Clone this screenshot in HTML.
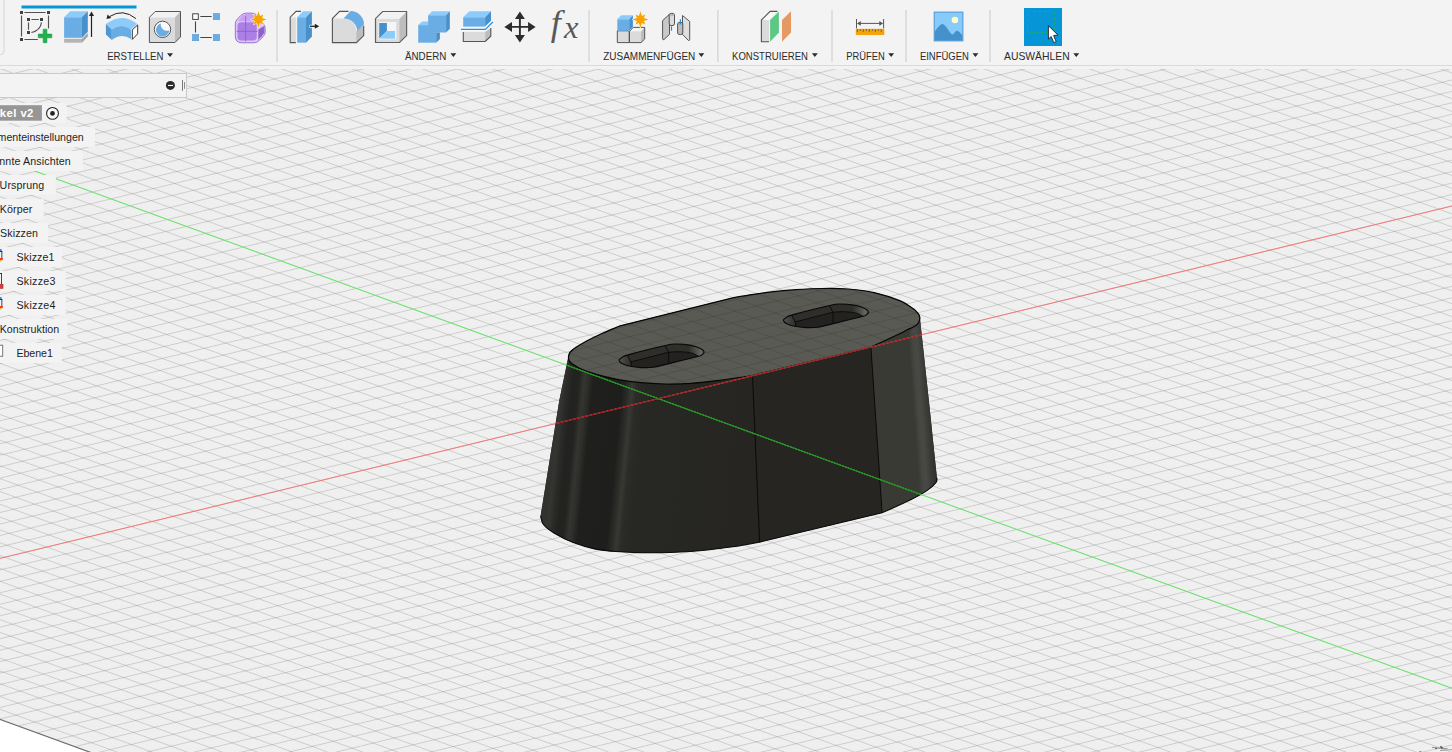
<!DOCTYPE html>
<html lang="de"><head><meta charset="utf-8"><title>Fusion 360</title>
<style>
html,body{margin:0;padding:0;}
body{width:1452px;height:752px;overflow:hidden;background:#fff;position:relative;font-family:"Liberation Sans",Arial,sans-serif;}
svg{position:absolute;left:0;top:0;display:block;}

</style></head><body>
<svg id="canvas" width="1452" height="752" viewBox="0 0 1452 752">
<defs><clipPath id="gridclip"><path d="M0 66 H1452 V752 H89.4 L0 719.4 Z"/></clipPath></defs>
<rect x="0" y="66" width="1452" height="686" fill="#ffffff"/>
<path d="M0 66 H1452 V752 H89.4 L0 719.4 Z" fill="#fefefe"/>
<g clip-path="url(#gridclip)" fill="none">
<path d="M-2.0 66.9L1.8 66.0M-2.0 68.1L6.6 66.0M-2.0 69.2L11.3 66.0M-2.0 70.4L16.0 66.0M-2.0 71.5L20.7 66.0M-2.0 72.7L25.5 66.0M-2.0 73.8L30.2 66.0M-2.0 75.0L34.9 66.0M-2.0 76.1L39.6 66.0M-2.0 78.4L49.1 66.0M-2.0 79.5L53.8 66.0M-2.0 80.7L58.5 66.0M-2.0 81.8L63.3 66.0M-2.0 83.0L68.0 66.0M-2.0 84.1L72.7 66.0M-2.0 85.3L77.4 66.0M-2.0 86.4L82.2 66.0M-2.0 87.6L86.9 66.0M-2.0 89.9L96.3 66.0M-2.0 91.0L101.1 66.0M-2.0 92.2L105.8 66.0M-2.0 93.3L110.5 66.0M-2.0 94.5L115.2 66.0M-2.0 95.6L120.0 66.0M-2.0 96.8L124.7 66.0M-2.0 97.9L129.4 66.0M-2.0 99.0L134.1 66.0M-2.0 101.3L143.6 66.0M-2.0 102.5L148.3 66.0M-2.0 103.6L153.0 66.0M-2.0 104.8L157.8 66.0M-2.0 105.9L162.5 66.0M-2.0 107.1L167.2 66.0M-2.0 108.2L171.9 66.0M-2.0 109.4L176.7 66.0M-2.0 110.5L181.4 66.0M-2.0 112.8L190.8 66.0M-2.0 114.0L195.6 66.0M-2.0 115.1L200.3 66.0M-2.0 116.2L205.0 66.0M-2.0 117.4L209.7 66.0M-2.0 118.5L214.5 66.0M-2.0 119.7L219.2 66.0M-2.0 120.8L223.9 66.0M-2.0 122.0L228.6 66.0M-2.0 124.3L238.1 66.0M-2.0 125.4L242.8 66.0M-2.0 126.6L247.5 66.0M-2.0 127.7L252.3 66.0M-2.0 128.9L257.0 66.0M-2.0 130.0L261.7 66.0M-2.0 131.2L266.4 66.0M-2.0 132.3L271.2 66.0M-2.0 133.4L275.9 66.0M-2.0 135.7L285.3 66.0M-2.0 136.9L290.1 66.0M-2.0 138.0L294.8 66.0M-2.0 139.2L299.5 66.0M-2.0 140.3L304.2 66.0M-2.0 141.5L309.0 66.0M-2.0 142.6L313.7 66.0M-2.0 143.8L318.4 66.0M-2.0 144.9L323.1 66.0M-2.0 147.2L332.6 66.0M-2.0 148.4L337.3 66.0M-2.0 149.5L342.0 66.0M-2.0 150.7L346.8 66.0M-2.0 151.8L351.5 66.0M-2.0 152.9L356.2 66.0M-2.0 154.1L360.9 66.0M-2.0 155.2L365.7 66.0M-2.0 156.4L370.4 66.0M-2.0 158.7L379.8 66.0M-2.0 159.8L384.6 66.0M-2.0 161.0L389.3 66.0M-2.0 162.1L394.0 66.0M-2.0 163.3L398.7 66.0M-2.0 164.4L403.5 66.0M-2.0 165.6L408.2 66.0M-2.0 166.7L412.9 66.0M-2.0 167.9L417.6 66.0M-2.0 170.1L427.1 66.0M-2.0 171.3L431.8 66.0M-2.0 172.4L436.5 66.0M-2.0 173.6L441.3 66.0M-2.0 174.7L446.0 66.0M-2.0 175.9L450.7 66.0M-2.0 177.0L455.4 66.0M-2.0 178.2L460.2 66.0M-2.0 179.3L464.9 66.0M-2.0 181.6L474.3 66.0M-2.0 182.8L479.1 66.0M-2.0 183.9L483.8 66.0M-2.0 185.1L488.5 66.0M-2.0 186.2L493.2 66.0M-2.0 187.3L498.0 66.0M-2.0 188.5L502.7 66.0M-2.0 189.6L507.4 66.0M-2.0 190.8L512.1 66.0M-2.0 193.1L521.6 66.0M-2.0 194.2L526.3 66.0M-2.0 195.4L531.0 66.0M-2.0 196.5L535.8 66.0M-2.0 197.7L540.5 66.0M-2.0 198.8L545.2 66.0M-2.0 200.0L549.9 66.0M-2.0 201.1L554.7 66.0M-2.0 202.3L559.4 66.0M-2.0 204.6L568.8 66.0M-2.0 205.7L573.5 66.0M-2.0 206.8L578.3 66.0M-2.0 208.0L583.0 66.0M-2.0 209.1L587.7 66.0M-2.0 210.3L592.4 66.0M-2.0 211.4L597.2 66.0M-2.0 212.6L601.9 66.0M-2.0 213.7L606.6 66.0M-2.0 216.0L616.1 66.0M-2.0 217.2L620.8 66.0M-2.0 218.3L625.5 66.0M-2.0 219.5L630.2 66.0M-2.0 220.6L635.0 66.0M-2.0 221.8L639.7 66.0M-2.0 222.9L644.4 66.0M-2.0 224.0L649.1 66.0M-2.0 225.2L653.9 66.0M-2.0 227.5L663.3 66.0M-2.0 228.6L668.0 66.0M-2.0 229.8L672.8 66.0M-2.0 230.9L677.5 66.0M-2.0 232.1L682.2 66.0M-2.0 233.2L686.9 66.0M-2.0 234.4L691.7 66.0M-2.0 235.5L696.4 66.0M-2.0 236.7L701.1 66.0M-2.0 239.0L710.6 66.0M-2.0 240.1L715.3 66.0M-2.0 241.2L720.0 66.0M-2.0 242.4L724.7 66.0M-2.0 243.5L729.5 66.0M-2.0 244.7L734.2 66.0M-2.0 245.8L738.9 66.0M-2.0 247.0L743.6 66.0M-2.0 248.1L748.4 66.0M-2.0 250.4L757.8 66.0M-2.0 251.6L762.5 66.0M-2.0 252.7L767.3 66.0M-2.0 253.9L772.0 66.0M-2.0 255.0L776.7 66.0M-2.0 256.2L781.4 66.0M-2.0 257.3L786.2 66.0M-2.0 258.5L790.9 66.0M-2.0 259.6L795.6 66.0M-2.0 261.9L805.1 66.0M-2.0 263.0L809.8 66.0M-2.0 264.2L814.5 66.0M-2.0 265.3L819.2 66.0M-2.0 266.5L824.0 66.0M-2.0 267.6L828.7 66.0M-2.0 268.8L833.4 66.0M-2.0 269.9L838.1 66.0M-2.0 271.1L842.9 66.0M-2.0 273.4L852.3 66.0M-2.0 274.5L857.0 66.0M-2.0 275.7L861.8 66.0M-2.0 276.8L866.5 66.0M-2.0 277.9L871.2 66.0M-2.0 279.1L875.9 66.0M-2.0 280.2L880.7 66.0M-2.0 281.4L885.4 66.0M-2.0 282.5L890.1 66.0M-2.0 284.8L899.6 66.0M-2.0 286.0L904.3 66.0M-2.0 287.1L909.0 66.0M-2.0 288.3L913.7 66.0M-2.0 289.4L918.5 66.0M-2.0 290.6L923.2 66.0M-2.0 291.7L927.9 66.0M-2.0 292.9L932.6 66.0M-2.0 294.0L937.4 66.0M-2.0 296.3L946.8 66.0M-2.0 297.4L951.5 66.0M-2.0 298.6L956.3 66.0M-2.0 299.7L961.0 66.0M-2.0 300.9L965.7 66.0M-2.0 302.0L970.4 66.0M-2.0 303.2L975.2 66.0M-2.0 304.3L979.9 66.0M-2.0 305.5L984.6 66.0M-2.0 307.8L994.1 66.0M-2.0 308.9L998.8 66.0M-2.0 310.1L1003.5 66.0M-2.0 311.2L1008.2 66.0M-2.0 312.4L1013.0 66.0M-2.0 313.5L1017.7 66.0M-2.0 314.6L1022.4 66.0M-2.0 315.8L1027.1 66.0M-2.0 316.9L1031.9 66.0M-2.0 319.2L1041.3 66.0M-2.0 320.4L1046.0 66.0M-2.0 321.5L1050.8 66.0M-2.0 322.7L1055.5 66.0M-2.0 323.8L1060.2 66.0M-2.0 325.0L1064.9 66.0M-2.0 326.1L1069.7 66.0M-2.0 327.3L1074.4 66.0M-2.0 328.4L1079.1 66.0M-2.0 330.7L1088.6 66.0M-2.0 331.8L1093.3 66.0M-2.0 333.0L1098.0 66.0M-2.0 334.1L1102.7 66.0M-2.0 335.3L1107.5 66.0M-2.0 336.4L1112.2 66.0M-2.0 337.6L1116.9 66.0M-2.0 338.7L1121.6 66.0M-2.0 339.9L1126.4 66.0M-2.0 342.2L1135.8 66.0M-2.0 343.3L1140.5 66.0M-2.0 344.5L1145.3 66.0M-2.0 345.6L1150.0 66.0M-2.0 346.8L1154.7 66.0M-2.0 347.9L1159.4 66.0M-2.0 349.1L1164.2 66.0M-2.0 350.2L1168.9 66.0M-2.0 351.3L1173.6 66.0M-2.0 353.6L1183.1 66.0M-2.0 354.8L1187.8 66.0M-2.0 355.9L1192.5 66.0M-2.0 357.1L1197.2 66.0M-2.0 358.2L1202.0 66.0M-2.0 359.4L1206.7 66.0M-2.0 360.5L1211.4 66.0M-2.0 361.7L1216.1 66.0M-2.0 362.8L1220.8 66.0M-2.0 365.1L1230.3 66.0M-2.0 366.3L1235.0 66.0M-2.0 367.4L1239.7 66.0M-2.0 368.5L1244.5 66.0M-2.0 369.7L1249.2 66.0M-2.0 370.8L1253.9 66.0M-2.0 372.0L1258.6 66.0M-2.0 373.1L1263.4 66.0M-2.0 374.3L1268.1 66.0M-2.0 376.6L1277.5 66.0M-2.0 377.7L1282.3 66.0M-2.0 378.9L1287.0 66.0M-2.0 380.0L1291.7 66.0M-2.0 381.2L1296.4 66.0M-2.0 382.3L1301.2 66.0M-2.0 383.5L1305.9 66.0M-2.0 384.6L1310.6 66.0M-2.0 385.7L1315.3 66.0M-2.0 388.0L1324.8 66.0M-2.0 389.2L1329.5 66.0M-2.0 390.3L1334.2 66.0M-2.0 391.5L1339.0 66.0M-2.0 392.6L1343.7 66.0M-2.0 393.8L1348.4 66.0M-2.0 394.9L1353.1 66.0M-2.0 396.1L1357.9 66.0M-2.0 397.2L1362.6 66.0M-2.0 399.5L1372.0 66.0M-2.0 400.7L1376.8 66.0M-2.0 401.8L1381.5 66.0M-2.0 403.0L1386.2 66.0M-2.0 404.1L1390.9 66.0M-2.0 405.2L1395.7 66.0M-2.0 406.4L1400.4 66.0M-2.0 407.5L1405.1 66.0M-2.0 408.7L1409.8 66.0M-2.0 411.0L1419.3 66.0M-2.0 412.1L1424.0 66.0M-2.0 413.3L1428.7 66.0M-2.0 414.4L1433.5 66.0M-2.0 415.6L1438.2 66.0M-2.0 416.7L1442.9 66.0M-2.0 417.9L1447.6 66.0M-2.0 419.0L1452.4 66.0M-2.0 420.2L1454.0 66.8M-2.0 422.4L1454.0 69.0M-2.0 423.6L1454.0 70.2M-2.0 424.7L1454.0 71.3M-2.0 425.9L1454.0 72.5M-2.0 427.0L1454.0 73.6M-2.0 428.2L1454.0 74.8M-2.0 429.3L1454.0 75.9M-2.0 430.5L1454.0 77.1M-2.0 431.6L1454.0 78.2M-2.0 433.9L1454.0 80.5M-2.0 435.1L1454.0 81.7M-2.0 436.2L1454.0 82.8M-2.0 437.4L1454.0 84.0M-2.0 438.5L1454.0 85.1M-2.0 439.6L1454.0 86.2M-2.0 440.8L1454.0 87.4M-2.0 441.9L1454.0 88.5M-2.0 443.1L1454.0 89.7M-2.0 445.4L1454.0 92.0M-2.0 446.5L1454.0 93.1M-2.0 447.7L1454.0 94.3M-2.0 448.8L1454.0 95.4M-2.0 450.0L1454.0 96.6M-2.0 451.1L1454.0 97.7M-2.0 452.3L1454.0 98.9M-2.0 453.4L1454.0 100.0M-2.0 454.6L1454.0 101.2M-2.0 456.9L1454.0 103.4M-2.0 458.0L1454.0 104.6M-2.0 459.1L1454.0 105.7M-2.0 460.3L1454.0 106.9M-2.0 461.4L1454.0 108.0M-2.0 462.6L1454.0 109.2M-2.0 463.7L1454.0 110.3M-2.0 464.9L1454.0 111.5M-2.0 466.0L1454.0 112.6M-2.0 468.3L1454.0 114.9M-2.0 469.5L1454.0 116.1M-2.0 470.6L1454.0 117.2M-2.0 471.8L1454.0 118.4M-2.0 472.9L1454.0 119.5M-2.0 474.1L1454.0 120.7M-2.0 475.2L1454.0 121.8M-2.0 476.3L1454.0 122.9M-2.0 477.5L1454.0 124.1M-2.0 479.8L1454.0 126.4M-2.0 480.9L1454.0 127.5M-2.0 482.1L1454.0 128.7M-2.0 483.2L1454.0 129.8M-2.0 484.4L1454.0 131.0M-2.0 485.5L1454.0 132.1M-2.0 486.7L1454.0 133.3M-2.0 487.8L1454.0 134.4M-2.0 489.0L1454.0 135.6M-2.0 491.3L1454.0 137.9M-2.0 492.4L1454.0 139.0M-2.0 493.5L1454.0 140.1M-2.0 494.7L1454.0 141.3M-2.0 495.8L1454.0 142.4M-2.0 497.0L1454.0 143.6M-2.0 498.1L1454.0 144.7M-2.0 499.3L1454.0 145.9M-2.0 500.4L1454.0 147.0M-2.0 502.7L1454.0 149.3M-2.0 503.9L1454.0 150.5M-2.0 505.0L1454.0 151.6M-2.0 506.2L1454.0 152.8M-2.0 507.3L1454.0 153.9M-2.0 508.5L1454.0 155.1M-2.0 509.6L1454.0 156.2M-2.0 510.8L1454.0 157.3M-2.0 511.9L1454.0 158.5M-2.0 514.2L1454.0 160.8M-2.0 515.3L1454.0 161.9M-2.0 516.5L1454.0 163.1M-2.0 517.6L1454.0 164.2M-2.0 518.8L1454.0 165.4M-2.0 519.9L1454.0 166.5M-2.0 521.1L1454.0 167.7M-2.0 522.2L1454.0 168.8M-2.0 523.4L1454.0 170.0M-2.0 525.7L1454.0 172.3M-2.0 526.8L1454.0 173.4M-2.0 528.0L1454.0 174.6M-2.0 529.1L1454.0 175.7M-2.0 530.2L1454.0 176.8M-2.0 531.4L1454.0 178.0M-2.0 532.5L1454.0 179.1M-2.0 533.7L1454.0 180.3M-2.0 534.8L1454.0 181.4M-2.0 537.1L1454.0 183.7M-2.0 538.3L1454.0 184.9M-2.0 539.4L1454.0 186.0M-2.0 540.6L1454.0 187.2M-2.0 541.7L1454.0 188.3M-2.0 542.9L1454.0 189.5M-2.0 544.0L1454.0 190.6M-2.0 545.2L1454.0 191.8M-2.0 546.3L1454.0 192.9M-2.0 548.6L1454.0 195.2M-2.0 549.7L1454.0 196.3M-2.0 550.9L1454.0 197.5M-2.0 552.0L1454.0 198.6M-2.0 553.2L1454.0 199.8M-2.0 554.3L1454.0 200.9M-2.0 555.5L1454.0 202.1M-2.0 556.6L1454.0 203.2M-2.0 557.8L1454.0 204.4M-2.0 560.1L1454.0 206.7M-2.0 561.2L1454.0 207.8M-2.0 562.4L1454.0 209.0M-2.0 563.5L1454.0 210.1M-2.0 564.7L1454.0 211.2M-2.0 565.8L1454.0 212.4M-2.0 566.9L1454.0 213.5M-2.0 568.1L1454.0 214.7M-2.0 569.2L1454.0 215.8M-2.0 571.5L1454.0 218.1M-2.0 572.7L1454.0 219.3M-2.0 573.8L1454.0 220.4M-2.0 575.0L1454.0 221.6M-2.0 576.1L1454.0 222.7M-2.0 577.3L1454.0 223.9M-2.0 578.4L1454.0 225.0M-2.0 579.6L1454.0 226.2M-2.0 580.7L1454.0 227.3M-2.0 583.0L1454.0 229.6M-2.0 584.1L1454.0 230.7M-2.0 585.3L1454.0 231.9M-2.0 586.4L1454.0 233.0M-2.0 587.6L1454.0 234.2M-2.0 588.7L1454.0 235.3M-2.0 589.9L1454.0 236.5M-2.0 591.0L1454.0 237.6M-2.0 592.2L1454.0 238.8M-2.0 594.5L1454.0 241.1M-2.0 595.6L1454.0 242.2M-2.0 596.8L1454.0 243.4M-2.0 597.9L1454.0 244.5M-2.0 599.1L1454.0 245.7M-2.0 600.2L1454.0 246.8M-2.0 601.3L1454.0 247.9M-2.0 602.5L1454.0 249.1M-2.0 603.6L1454.0 250.2M-2.0 605.9L1454.0 252.5M-2.0 607.1L1454.0 253.7M-2.0 608.2L1454.0 254.8M-2.0 609.4L1454.0 256.0M-2.0 610.5L1454.0 257.1M-2.0 611.7L1454.0 258.3M-2.0 612.8L1454.0 259.4M-2.0 614.0L1454.0 260.6M-2.0 615.1L1454.0 261.7M-2.0 617.4L1454.0 264.0M-2.0 618.6L1454.0 265.1M-2.0 619.7L1454.0 266.3M-2.0 620.8L1454.0 267.4M-2.0 622.0L1454.0 268.6M-2.0 623.1L1454.0 269.7M-2.0 624.3L1454.0 270.9M-2.0 625.4L1454.0 272.0M-2.0 626.6L1454.0 273.2M-2.0 628.9L1454.0 275.5M-2.0 630.0L1454.0 276.6M-2.0 631.2L1454.0 277.8M-2.0 632.3L1454.0 278.9M-2.0 633.5L1454.0 280.1M-2.0 634.6L1454.0 281.2M-2.0 635.8L1454.0 282.4M-2.0 636.9L1454.0 283.5M-2.0 638.0L1454.0 284.6M-2.0 640.3L1454.0 286.9M-2.0 641.5L1454.0 288.1M-2.0 642.6L1454.0 289.2M-2.0 643.8L1454.0 290.4M-2.0 644.9L1454.0 291.5M-2.0 646.1L1454.0 292.7M-2.0 647.2L1454.0 293.8M-2.0 648.4L1454.0 295.0M-2.0 649.5L1454.0 296.1M-2.0 651.8L1454.0 298.4M-2.0 653.0L1454.0 299.6M-2.0 654.1L1454.0 300.7M-2.0 655.3L1454.0 301.8M-2.0 656.4L1454.0 303.0M-2.0 657.5L1454.0 304.1M-2.0 658.7L1454.0 305.3M-2.0 659.8L1454.0 306.4M-2.0 661.0L1454.0 307.6M-2.0 663.3L1454.0 309.9M-2.0 664.4L1454.0 311.0M-2.0 665.6L1454.0 312.2M-2.0 666.7L1454.0 313.3M-2.0 667.9L1454.0 314.5M-2.0 669.0L1454.0 315.6M-2.0 670.2L1454.0 316.8M-2.0 671.3L1454.0 317.9M-2.0 672.5L1454.0 319.0M-2.0 674.7L1454.0 321.3M-2.0 675.9L1454.0 322.5M-2.0 677.0L1454.0 323.6M-2.0 678.2L1454.0 324.8M-2.0 679.3L1454.0 325.9M-2.0 680.5L1454.0 327.1M-2.0 681.6L1454.0 328.2M-2.0 682.8L1454.0 329.4M-2.0 683.9L1454.0 330.5M-2.0 686.2L1454.0 332.8M-2.0 687.4L1454.0 334.0M-2.0 688.5L1454.0 335.1M-2.0 689.7L1454.0 336.3M-2.0 690.8L1454.0 337.4M-2.0 691.9L1454.0 338.5M-2.0 693.1L1454.0 339.7M-2.0 694.2L1454.0 340.8M-2.0 695.4L1454.0 342.0M-2.0 697.7L1454.0 344.3M-2.0 698.8L1454.0 345.4M-2.0 700.0L1454.0 346.6M-2.0 701.1L1454.0 347.7M-2.0 702.3L1454.0 348.9M-2.0 703.4L1454.0 350.0M-2.0 704.6L1454.0 351.2M-2.0 705.7L1454.0 352.3M-2.0 706.9L1454.0 353.5M-2.0 709.2L1454.0 355.7M-2.0 710.3L1454.0 356.9M-2.0 711.4L1454.0 358.0M-2.0 712.6L1454.0 359.2M-2.0 713.7L1454.0 360.3M-2.0 714.9L1454.0 361.5M-2.0 716.0L1454.0 362.6M-2.0 717.2L1454.0 363.8M-2.0 718.3L1454.0 364.9M1.2 719.8L1454.0 367.2M3.1 720.5L1454.0 368.4M5.0 721.2L1454.0 369.5M6.9 721.9L1454.0 370.7M8.8 722.6L1454.0 371.8M10.7 723.3L1454.0 373.0M12.6 724.0L1454.0 374.1M14.5 724.7L1454.0 375.2M16.3 725.3L1454.0 376.4M20.1 726.7L1454.0 378.7M22.0 727.4L1454.0 379.8M23.9 728.1L1454.0 381.0M25.8 728.8L1454.0 382.1M27.7 729.5L1454.0 383.3M29.6 730.2L1454.0 384.4M31.4 730.9L1454.0 385.6M33.3 731.5L1454.0 386.7M35.2 732.2L1454.0 387.9M39.0 733.6L1454.0 390.2M40.9 734.3L1454.0 391.3M42.8 735.0L1454.0 392.4M44.6 735.7L1454.0 393.6M46.5 736.4L1454.0 394.7M48.4 737.1L1454.0 395.9M50.3 737.7L1454.0 397.0M52.2 738.4L1454.0 398.2M54.1 739.1L1454.0 399.3M57.9 740.5L1454.0 401.6M59.7 741.2L1454.0 402.8M61.6 741.9L1454.0 403.9M63.5 742.6L1454.0 405.1M65.4 743.2L1454.0 406.2M67.3 743.9L1454.0 407.4M69.2 744.6L1454.0 408.5M71.1 745.3L1454.0 409.6M73.0 746.0L1454.0 410.8M76.7 747.4L1454.0 413.1M78.6 748.1L1454.0 414.2M80.5 748.8L1454.0 415.4M82.4 749.4L1454.0 416.5M84.3 750.1L1454.0 417.7M86.2 750.8L1454.0 418.8M88.0 751.5L1454.0 420.0M89.9 752.2L1454.0 421.1M91.8 752.9L1454.0 422.3M96.7 754.0L1454.0 424.6M101.4 754.0L1454.0 425.7M106.2 754.0L1454.0 426.9M110.9 754.0L1454.0 428.0M115.6 754.0L1454.0 429.1M120.3 754.0L1454.0 430.3M125.1 754.0L1454.0 431.4M129.8 754.0L1454.0 432.6M134.5 754.0L1454.0 433.7M144.0 754.0L1454.0 436.0M148.7 754.0L1454.0 437.2M153.4 754.0L1454.0 438.3M158.1 754.0L1454.0 439.5M162.9 754.0L1454.0 440.6M167.6 754.0L1454.0 441.8M172.3 754.0L1454.0 442.9M177.0 754.0L1454.0 444.1M181.8 754.0L1454.0 445.2M191.2 754.0L1454.0 447.5M195.9 754.0L1454.0 448.6M200.7 754.0L1454.0 449.8M205.4 754.0L1454.0 450.9M210.1 754.0L1454.0 452.1M214.8 754.0L1454.0 453.2M219.6 754.0L1454.0 454.4M224.3 754.0L1454.0 455.5M229.0 754.0L1454.0 456.7M238.5 754.0L1454.0 459.0M243.2 754.0L1454.0 460.1M247.9 754.0L1454.0 461.3M252.6 754.0L1454.0 462.4M257.4 754.0L1454.0 463.5M262.1 754.0L1454.0 464.7M266.8 754.0L1454.0 465.8M271.5 754.0L1454.0 467.0M276.3 754.0L1454.0 468.1M285.7 754.0L1454.0 470.4M290.4 754.0L1454.0 471.6M295.2 754.0L1454.0 472.7M299.9 754.0L1454.0 473.9M304.6 754.0L1454.0 475.0M309.3 754.0L1454.0 476.2M314.1 754.0L1454.0 477.3M318.8 754.0L1454.0 478.5M323.5 754.0L1454.0 479.6M333.0 754.0L1454.0 481.9M337.7 754.0L1454.0 483.0M342.4 754.0L1454.0 484.2M347.1 754.0L1454.0 485.3M351.9 754.0L1454.0 486.5M356.6 754.0L1454.0 487.6M361.3 754.0L1454.0 488.8M366.0 754.0L1454.0 489.9M370.8 754.0L1454.0 491.1M380.2 754.0L1454.0 493.4M384.9 754.0L1454.0 494.5M389.7 754.0L1454.0 495.7M394.4 754.0L1454.0 496.8M399.1 754.0L1454.0 498.0M403.8 754.0L1454.0 499.1M408.5 754.0L1454.0 500.2M413.3 754.0L1454.0 501.4M418.0 754.0L1454.0 502.5M427.4 754.0L1454.0 504.8M432.2 754.0L1454.0 506.0M436.9 754.0L1454.0 507.1M441.6 754.0L1454.0 508.3M446.3 754.0L1454.0 509.4M451.1 754.0L1454.0 510.6M455.8 754.0L1454.0 511.7M460.5 754.0L1454.0 512.9M465.2 754.0L1454.0 514.0M474.7 754.0L1454.0 516.3M479.4 754.0L1454.0 517.4M484.1 754.0L1454.0 518.6M488.9 754.0L1454.0 519.7M493.6 754.0L1454.0 520.9M498.3 754.0L1454.0 522.0M503.0 754.0L1454.0 523.2M507.8 754.0L1454.0 524.3M512.5 754.0L1454.0 525.5M521.9 754.0L1454.0 527.8M526.7 754.0L1454.0 528.9M531.4 754.0L1454.0 530.1M536.1 754.0L1454.0 531.2M540.8 754.0L1454.0 532.4M545.6 754.0L1454.0 533.5M550.3 754.0L1454.0 534.7M555.0 754.0L1454.0 535.8M559.7 754.0L1454.0 536.9M569.2 754.0L1454.0 539.2M573.9 754.0L1454.0 540.4M578.6 754.0L1454.0 541.5M583.4 754.0L1454.0 542.7M588.1 754.0L1454.0 543.8M592.8 754.0L1454.0 545.0M597.5 754.0L1454.0 546.1M602.3 754.0L1454.0 547.3M607.0 754.0L1454.0 548.4M616.4 754.0L1454.0 550.7M621.2 754.0L1454.0 551.9M625.9 754.0L1454.0 553.0M630.6 754.0L1454.0 554.1M635.3 754.0L1454.0 555.3M640.1 754.0L1454.0 556.4M644.8 754.0L1454.0 557.6M649.5 754.0L1454.0 558.7M654.2 754.0L1454.0 559.9M663.7 754.0L1454.0 562.2M668.4 754.0L1454.0 563.3M673.1 754.0L1454.0 564.5M677.9 754.0L1454.0 565.6M682.6 754.0L1454.0 566.8M687.3 754.0L1454.0 567.9M692.0 754.0L1454.0 569.1M696.8 754.0L1454.0 570.2M701.5 754.0L1454.0 571.3M710.9 754.0L1454.0 573.6M715.7 754.0L1454.0 574.8M720.4 754.0L1454.0 575.9M725.1 754.0L1454.0 577.1M729.8 754.0L1454.0 578.2M734.6 754.0L1454.0 579.4M739.3 754.0L1454.0 580.5M744.0 754.0L1454.0 581.7M748.7 754.0L1454.0 582.8M758.2 754.0L1454.0 585.1M762.9 754.0L1454.0 586.3M767.6 754.0L1454.0 587.4M772.4 754.0L1454.0 588.6M777.1 754.0L1454.0 589.7M781.8 754.0L1454.0 590.8M786.5 754.0L1454.0 592.0M791.3 754.0L1454.0 593.1M796.0 754.0L1454.0 594.3M805.4 754.0L1454.0 596.6M810.2 754.0L1454.0 597.7M814.9 754.0L1454.0 598.9M819.6 754.0L1454.0 600.0M824.3 754.0L1454.0 601.2M829.1 754.0L1454.0 602.3M833.8 754.0L1454.0 603.5M838.5 754.0L1454.0 604.6M843.2 754.0L1454.0 605.8M852.7 754.0L1454.0 608.0M857.4 754.0L1454.0 609.2M862.1 754.0L1454.0 610.3M866.9 754.0L1454.0 611.5M871.6 754.0L1454.0 612.6M876.3 754.0L1454.0 613.8M881.0 754.0L1454.0 614.9M885.8 754.0L1454.0 616.1M890.5 754.0L1454.0 617.2M899.9 754.0L1454.0 619.5M904.7 754.0L1454.0 620.7M909.4 754.0L1454.0 621.8M914.1 754.0L1454.0 623.0M918.8 754.0L1454.0 624.1M923.6 754.0L1454.0 625.2M928.3 754.0L1454.0 626.4M933.0 754.0L1454.0 627.5M937.7 754.0L1454.0 628.7M947.2 754.0L1454.0 631.0M951.9 754.0L1454.0 632.1M956.6 754.0L1454.0 633.3M961.4 754.0L1454.0 634.4M966.1 754.0L1454.0 635.6M970.8 754.0L1454.0 636.7M975.5 754.0L1454.0 637.9M980.3 754.0L1454.0 639.0M985.0 754.0L1454.0 640.2M994.4 754.0L1454.0 642.5M999.2 754.0L1454.0 643.6M1003.9 754.0L1454.0 644.7M1008.6 754.0L1454.0 645.9M1013.3 754.0L1454.0 647.0M1018.1 754.0L1454.0 648.2M1022.8 754.0L1454.0 649.3M1027.5 754.0L1454.0 650.5M1032.2 754.0L1454.0 651.6M1041.7 754.0L1454.0 653.9M1046.4 754.0L1454.0 655.1M1051.1 754.0L1454.0 656.2M1055.8 754.0L1454.0 657.4M1060.6 754.0L1454.0 658.5M1065.3 754.0L1454.0 659.7M1070.0 754.0L1454.0 660.8M1074.7 754.0L1454.0 661.9M1079.5 754.0L1454.0 663.1M1088.9 754.0L1454.0 665.4M1093.6 754.0L1454.0 666.5M1098.4 754.0L1454.0 667.7M1103.1 754.0L1454.0 668.8M1107.8 754.0L1454.0 670.0M1112.5 754.0L1454.0 671.1M1117.3 754.0L1454.0 672.3M1122.0 754.0L1454.0 673.4M1126.7 754.0L1454.0 674.6M1136.2 754.0L1454.0 676.9M1140.9 754.0L1454.0 678.0M1145.6 754.0L1454.0 679.1M1150.3 754.0L1454.0 680.3M1155.1 754.0L1454.0 681.4M1159.8 754.0L1454.0 682.6M1164.5 754.0L1454.0 683.7M1169.2 754.0L1454.0 684.9M1174.0 754.0L1454.0 686.0M1183.4 754.0L1454.0 688.3M1188.1 754.0L1454.0 689.5M1192.9 754.0L1454.0 690.6M1197.6 754.0L1454.0 691.8M1202.3 754.0L1454.0 692.9M1207.0 754.0L1454.0 694.1M1211.8 754.0L1454.0 695.2M1216.5 754.0L1454.0 696.4M1221.2 754.0L1454.0 697.5M1230.7 754.0L1454.0 699.8M1235.4 754.0L1454.0 700.9M1240.1 754.0L1454.0 702.1M1244.8 754.0L1454.0 703.2M1249.6 754.0L1454.0 704.4M1254.3 754.0L1454.0 705.5M1259.0 754.0L1454.0 706.7M1263.7 754.0L1454.0 707.8M1268.5 754.0L1454.0 709.0M1277.9 754.0L1454.0 711.3M1282.6 754.0L1454.0 712.4M1287.4 754.0L1454.0 713.6M1292.1 754.0L1454.0 714.7M1296.8 754.0L1454.0 715.8M1301.5 754.0L1454.0 717.0M1306.3 754.0L1454.0 718.1M1311.0 754.0L1454.0 719.3M1315.7 754.0L1454.0 720.4M1325.2 754.0L1454.0 722.7M1329.9 754.0L1454.0 723.9M1334.6 754.0L1454.0 725.0M1339.3 754.0L1454.0 726.2M1344.1 754.0L1454.0 727.3M1348.8 754.0L1454.0 728.5M1353.5 754.0L1454.0 729.6M1358.2 754.0L1454.0 730.8M1363.0 754.0L1454.0 731.9M1372.4 754.0L1454.0 734.2M1377.1 754.0L1454.0 735.3M1381.9 754.0L1454.0 736.5M1386.6 754.0L1454.0 737.6M1391.3 754.0L1454.0 738.8M1396.0 754.0L1454.0 739.9M1400.8 754.0L1454.0 741.1M1405.5 754.0L1454.0 742.2M1410.2 754.0L1454.0 743.4M1419.7 754.0L1454.0 745.7M1424.4 754.0L1454.0 746.8M1429.1 754.0L1454.0 748.0M1433.8 754.0L1454.0 749.1M1438.6 754.0L1454.0 750.3M1443.3 754.0L1454.0 751.4M1448.0 754.0L1454.0 752.5M1452.7 754.0L1454.0 753.7" stroke="#8c8c8c" stroke-opacity=".19" stroke-width=".45"/>
<path d="M-2.0 717.6L97.7 754.0M-2.0 716.3L101.2 754.0M-2.0 715.1L104.7 754.0M-2.0 713.8L108.2 754.0M-2.0 712.5L111.7 754.0M-2.0 711.2L115.2 754.0M-2.0 709.9L118.7 754.0M-2.0 707.4L125.8 754.0M-2.0 706.1L129.3 754.0M-2.0 704.8L132.8 754.0M-2.0 703.5L136.3 754.0M-2.0 702.2L139.8 754.0M-2.0 701.0L143.3 754.0M-2.0 699.7L146.8 754.0M-2.0 698.4L150.3 754.0M-2.0 697.1L153.8 754.0M-2.0 694.5L160.9 754.0M-2.0 693.3L164.4 754.0M-2.0 692.0L167.9 754.0M-2.0 690.7L171.4 754.0M-2.0 689.4L174.9 754.0M-2.0 688.1L178.4 754.0M-2.0 686.9L181.9 754.0M-2.0 685.6L185.4 754.0M-2.0 684.3L189.0 754.0M-2.0 681.7L196.0 754.0M-2.0 680.4L199.5 754.0M-2.0 679.2L203.0 754.0M-2.0 677.9L206.5 754.0M-2.0 676.6L210.0 754.0M-2.0 675.3L213.5 754.0M-2.0 674.0L217.1 754.0M-2.0 672.8L220.6 754.0M-2.0 671.5L224.1 754.0M-2.0 668.9L231.1 754.0M-2.0 667.6L234.6 754.0M-2.0 666.4L238.1 754.0M-2.0 665.1L241.6 754.0M-2.0 663.8L245.1 754.0M-2.0 662.5L248.7 754.0M-2.0 661.2L252.2 754.0M-2.0 659.9L255.7 754.0M-2.0 658.7L259.2 754.0M-2.0 656.1L266.2 754.0M-2.0 654.8L269.7 754.0M-2.0 653.5L273.2 754.0M-2.0 652.3L276.7 754.0M-2.0 651.0L280.3 754.0M-2.0 649.7L283.8 754.0M-2.0 648.4L287.3 754.0M-2.0 647.1L290.8 754.0M-2.0 645.8L294.3 754.0M-2.0 643.3L301.3 754.0M-2.0 642.0L304.8 754.0M-2.0 640.7L308.3 754.0M-2.0 639.4L311.9 754.0M-2.0 638.2L315.4 754.0M-2.0 636.9L318.9 754.0M-2.0 635.6L322.4 754.0M-2.0 634.3L325.9 754.0M-2.0 633.0L329.4 754.0M-2.0 630.5L336.4 754.0M-2.0 629.2L339.9 754.0M-2.0 627.9L343.5 754.0M-2.0 626.6L347.0 754.0M-2.0 625.3L350.5 754.0M-2.0 624.1L354.0 754.0M-2.0 622.8L357.5 754.0M-2.0 621.5L361.0 754.0M-2.0 620.2L364.5 754.0M-2.0 617.6L371.6 754.0M-2.0 616.4L375.1 754.0M-2.0 615.1L378.6 754.0M-2.0 613.8L382.1 754.0M-2.0 612.5L385.6 754.0M-2.0 611.2L389.1 754.0M-2.0 610.0L392.6 754.0M-2.0 608.7L396.1 754.0M-2.0 607.4L399.6 754.0M-2.0 604.8L406.7 754.0M-2.0 603.5L410.2 754.0M-2.0 602.3L413.7 754.0M-2.0 601.0L417.2 754.0M-2.0 599.7L420.7 754.0M-2.0 598.4L424.2 754.0M-2.0 597.1L427.7 754.0M-2.0 595.9L431.2 754.0M-2.0 594.6L434.8 754.0M-2.0 592.0L441.8 754.0M-2.0 590.7L445.3 754.0M-2.0 589.4L448.8 754.0M-2.0 588.2L452.3 754.0M-2.0 586.9L455.8 754.0M-2.0 585.6L459.3 754.0M-2.0 584.3L462.8 754.0M-2.0 583.0L466.4 754.0M-2.0 581.8L469.9 754.0M-2.0 579.2L476.9 754.0M-2.0 577.9L480.4 754.0M-2.0 576.6L483.9 754.0M-2.0 575.3L487.4 754.0M-2.0 574.1L490.9 754.0M-2.0 572.8L494.4 754.0M-2.0 571.5L498.0 754.0M-2.0 570.2L501.5 754.0M-2.0 568.9L505.0 754.0M-2.0 566.4L512.0 754.0M-2.0 565.1L515.5 754.0M-2.0 563.8L519.0 754.0M-2.0 562.5L522.5 754.0M-2.0 561.2L526.1 754.0M-2.0 560.0L529.6 754.0M-2.0 558.7L533.1 754.0M-2.0 557.4L536.6 754.0M-2.0 556.1L540.1 754.0M-2.0 553.6L547.1 754.0M-2.0 552.3L550.6 754.0M-2.0 551.0L554.1 754.0M-2.0 549.7L557.7 754.0M-2.0 548.4L561.2 754.0M-2.0 547.1L564.7 754.0M-2.0 545.9L568.2 754.0M-2.0 544.6L571.7 754.0M-2.0 543.3L575.2 754.0M-2.0 540.7L582.2 754.0M-2.0 539.5L585.7 754.0M-2.0 538.2L589.3 754.0M-2.0 536.9L592.8 754.0M-2.0 535.6L596.3 754.0M-2.0 534.3L599.8 754.0M-2.0 533.1L603.3 754.0M-2.0 531.8L606.8 754.0M-2.0 530.5L610.3 754.0M-2.0 527.9L617.3 754.0M-2.0 526.6L620.9 754.0M-2.0 525.4L624.4 754.0M-2.0 524.1L627.9 754.0M-2.0 522.8L631.4 754.0M-2.0 521.5L634.9 754.0M-2.0 520.2L638.4 754.0M-2.0 519.0L641.9 754.0M-2.0 517.7L645.4 754.0M-2.0 515.1L652.5 754.0M-2.0 513.8L656.0 754.0M-2.0 512.5L659.5 754.0M-2.0 511.3L663.0 754.0M-2.0 510.0L666.5 754.0M-2.0 508.7L670.0 754.0M-2.0 507.4L673.5 754.0M-2.0 506.1L677.0 754.0M-2.0 504.9L680.6 754.0M-2.0 502.3L687.6 754.0M-2.0 501.0L691.1 754.0M-2.0 499.7L694.6 754.0M-2.0 498.4L698.1 754.0M-2.0 497.2L701.6 754.0M-2.0 495.9L705.1 754.0M-2.0 494.6L708.6 754.0M-2.0 493.3L712.2 754.0M-2.0 492.0L715.7 754.0M-2.0 489.5L722.7 754.0M-2.0 488.2L726.2 754.0M-2.0 486.9L729.7 754.0M-2.0 485.6L733.2 754.0M-2.0 484.3L736.7 754.0M-2.0 483.1L740.2 754.0M-2.0 481.8L743.8 754.0M-2.0 480.5L747.3 754.0M-2.0 479.2L750.8 754.0M-2.0 476.7L757.8 754.0M-2.0 475.4L761.3 754.0M-2.0 474.1L764.8 754.0M-2.0 472.8L768.3 754.0M-2.0 471.5L771.8 754.0M-2.0 470.2L775.4 754.0M-2.0 469.0L778.9 754.0M-2.0 467.7L782.4 754.0M-2.0 466.4L785.9 754.0M-2.0 463.8L792.9 754.0M-2.0 462.6L796.4 754.0M-2.0 461.3L799.9 754.0M-2.0 460.0L803.5 754.0M-2.0 458.7L807.0 754.0M-2.0 457.4L810.5 754.0M-2.0 456.1L814.0 754.0M-2.0 454.9L817.5 754.0M-2.0 453.6L821.0 754.0M-2.0 451.0L828.0 754.0M-2.0 449.7L831.5 754.0M-2.0 448.5L835.1 754.0M-2.0 447.2L838.6 754.0M-2.0 445.9L842.1 754.0M-2.0 444.6L845.6 754.0M-2.0 443.3L849.1 754.0M-2.0 442.0L852.6 754.0M-2.0 440.8L856.1 754.0M-2.0 438.2L863.1 754.0M-2.0 436.9L866.7 754.0M-2.0 435.6L870.2 754.0M-2.0 434.4L873.7 754.0M-2.0 433.1L877.2 754.0M-2.0 431.8L880.7 754.0M-2.0 430.5L884.2 754.0M-2.0 429.2L887.7 754.0M-2.0 427.9L891.2 754.0M-2.0 425.4L898.3 754.0M-2.0 424.1L901.8 754.0M-2.0 422.8L905.3 754.0M-2.0 421.5L908.8 754.0M-2.0 420.3L912.3 754.0M-2.0 419.0L915.8 754.0M-2.0 417.7L919.3 754.0M-2.0 416.4L922.8 754.0M-2.0 415.1L926.3 754.0M-2.0 412.6L933.4 754.0M-2.0 411.3L936.9 754.0M-2.0 410.0L940.4 754.0M-2.0 408.7L943.9 754.0M-2.0 407.4L947.4 754.0M-2.0 406.2L950.9 754.0M-2.0 404.9L954.4 754.0M-2.0 403.6L958.0 754.0M-2.0 402.3L961.5 754.0M-2.0 399.7L968.5 754.0M-2.0 398.5L972.0 754.0M-2.0 397.2L975.5 754.0M-2.0 395.9L979.0 754.0M-2.0 394.6L982.5 754.0M-2.0 393.3L986.0 754.0M-2.0 392.1L989.6 754.0M-2.0 390.8L993.1 754.0M-2.0 389.5L996.6 754.0M-2.0 386.9L1003.6 754.0M-2.0 385.7L1007.1 754.0M-2.0 384.4L1010.6 754.0M-2.0 383.1L1014.1 754.0M-2.0 381.8L1017.6 754.0M-2.0 380.5L1021.2 754.0M-2.0 379.2L1024.7 754.0M-2.0 378.0L1028.2 754.0M-2.0 376.7L1031.7 754.0M-2.0 374.1L1038.7 754.0M-2.0 372.8L1042.2 754.0M-2.0 371.6L1045.7 754.0M-2.0 370.3L1049.2 754.0M-2.0 369.0L1052.8 754.0M-2.0 367.7L1056.3 754.0M-2.0 366.4L1059.8 754.0M-2.0 365.1L1063.3 754.0M-2.0 363.9L1066.8 754.0M-2.0 361.3L1073.8 754.0M-2.0 360.0L1077.3 754.0M-2.0 358.7L1080.8 754.0M-2.0 357.5L1084.4 754.0M-2.0 356.2L1087.9 754.0M-2.0 354.9L1091.4 754.0M-2.0 353.6L1094.9 754.0M-2.0 352.3L1098.4 754.0M-2.0 351.0L1101.9 754.0M-2.0 348.5L1108.9 754.0M-2.0 347.2L1112.5 754.0M-2.0 345.9L1116.0 754.0M-2.0 344.6L1119.5 754.0M-2.0 343.4L1123.0 754.0M-2.0 342.1L1126.5 754.0M-2.0 340.8L1130.0 754.0M-2.0 339.5L1133.5 754.0M-2.0 338.2L1137.0 754.0M-2.0 335.7L1144.1 754.0M-2.0 334.4L1147.6 754.0M-2.0 333.1L1151.1 754.0M-2.0 331.8L1154.6 754.0M-2.0 330.5L1158.1 754.0M-2.0 329.3L1161.6 754.0M-2.0 328.0L1165.1 754.0M-2.0 326.7L1168.6 754.0M-2.0 325.4L1172.1 754.0M-2.0 322.8L1179.2 754.0M-2.0 321.6L1182.7 754.0M-2.0 320.3L1186.2 754.0M-2.0 319.0L1189.7 754.0M-2.0 317.7L1193.2 754.0M-2.0 316.4L1196.7 754.0M-2.0 315.2L1200.2 754.0M-2.0 313.9L1203.7 754.0M-2.0 312.6L1207.3 754.0M-2.0 310.0L1214.3 754.0M-2.0 308.7L1217.8 754.0M-2.0 307.5L1221.3 754.0M-2.0 306.2L1224.8 754.0M-2.0 304.9L1228.3 754.0M-2.0 303.6L1231.8 754.0M-2.0 302.3L1235.3 754.0M-2.0 301.1L1238.9 754.0M-2.0 299.8L1242.4 754.0M-2.0 297.2L1249.4 754.0M-2.0 295.9L1252.9 754.0M-2.0 294.6L1256.4 754.0M-2.0 293.4L1259.9 754.0M-2.0 292.1L1263.4 754.0M-2.0 290.8L1267.0 754.0M-2.0 289.5L1270.5 754.0M-2.0 288.2L1274.0 754.0M-2.0 287.0L1277.5 754.0M-2.0 284.4L1284.5 754.0M-2.0 283.1L1288.0 754.0M-2.0 281.8L1291.5 754.0M-2.0 280.5L1295.0 754.0M-2.0 279.3L1298.6 754.0M-2.0 278.0L1302.1 754.0M-2.0 276.7L1305.6 754.0M-2.0 275.4L1309.1 754.0M-2.0 274.1L1312.6 754.0M-2.0 271.6L1319.6 754.0M-2.0 270.3L1323.1 754.0M-2.0 269.0L1326.6 754.0M-2.0 267.7L1330.2 754.0M-2.0 266.4L1333.7 754.0M-2.0 265.2L1337.2 754.0M-2.0 263.9L1340.7 754.0M-2.0 262.6L1344.2 754.0M-2.0 261.3L1347.7 754.0M-2.0 258.8L1354.7 754.0M-2.0 257.5L1358.2 754.0M-2.0 256.2L1361.8 754.0M-2.0 254.9L1365.3 754.0M-2.0 253.6L1368.8 754.0M-2.0 252.4L1372.3 754.0M-2.0 251.1L1375.8 754.0M-2.0 249.8L1379.3 754.0M-2.0 248.5L1382.8 754.0M-2.0 245.9L1389.9 754.0M-2.0 244.7L1393.4 754.0M-2.0 243.4L1396.9 754.0M-2.0 242.1L1400.4 754.0M-2.0 240.8L1403.9 754.0M-2.0 239.5L1407.4 754.0M-2.0 238.3L1410.9 754.0M-2.0 237.0L1414.4 754.0M-2.0 235.7L1417.9 754.0M-2.0 233.1L1425.0 754.0M-2.0 231.8L1428.5 754.0M-2.0 230.6L1432.0 754.0M-2.0 229.3L1435.5 754.0M-2.0 228.0L1439.0 754.0M-2.0 226.7L1442.5 754.0M-2.0 225.4L1446.0 754.0M-2.0 224.2L1449.5 754.0M-2.0 222.9L1453.1 754.0M-2.0 220.3L1454.0 751.8M-2.0 219.0L1454.0 750.5M-2.0 217.7L1454.0 749.2M-2.0 216.5L1454.0 747.9M-2.0 215.2L1454.0 746.7M-2.0 213.9L1454.0 745.4M-2.0 212.6L1454.0 744.1M-2.0 211.3L1454.0 742.8M-2.0 210.1L1454.0 741.5M-2.0 207.5L1454.0 739.0M-2.0 206.2L1454.0 737.7M-2.0 204.9L1454.0 736.4M-2.0 203.6L1454.0 735.1M-2.0 202.4L1454.0 733.8M-2.0 201.1L1454.0 732.6M-2.0 199.8L1454.0 731.3M-2.0 198.5L1454.0 730.0M-2.0 197.2L1454.0 728.7M-2.0 194.7L1454.0 726.1M-2.0 193.4L1454.0 724.9M-2.0 192.1L1454.0 723.6M-2.0 190.8L1454.0 722.3M-2.0 189.5L1454.0 721.0M-2.0 188.3L1454.0 719.7M-2.0 187.0L1454.0 718.5M-2.0 185.7L1454.0 717.2M-2.0 184.4L1454.0 715.9M-2.0 181.9L1454.0 713.3M-2.0 180.6L1454.0 712.0M-2.0 179.3L1454.0 710.8M-2.0 178.0L1454.0 709.5M-2.0 176.7L1454.0 708.2M-2.0 175.4L1454.0 706.9M-2.0 174.2L1454.0 705.6M-2.0 172.9L1454.0 704.4M-2.0 171.6L1454.0 703.1M-2.0 169.0L1454.0 700.5M-2.0 167.8L1454.0 699.2M-2.0 166.5L1454.0 697.9M-2.0 165.2L1454.0 696.7M-2.0 163.9L1454.0 695.4M-2.0 162.6L1454.0 694.1M-2.0 161.3L1454.0 692.8M-2.0 160.1L1454.0 691.5M-2.0 158.8L1454.0 690.3M-2.0 156.2L1454.0 687.7M-2.0 154.9L1454.0 686.4M-2.0 153.7L1454.0 685.1M-2.0 152.4L1454.0 683.8M-2.0 151.1L1454.0 682.6M-2.0 149.8L1454.0 681.3M-2.0 148.5L1454.0 680.0M-2.0 147.2L1454.0 678.7M-2.0 146.0L1454.0 677.4M-2.0 143.4L1454.0 674.9M-2.0 142.1L1454.0 673.6M-2.0 140.8L1454.0 672.3M-2.0 139.6L1454.0 671.0M-2.0 138.3L1454.0 669.8M-2.0 137.0L1454.0 668.5M-2.0 135.7L1454.0 667.2M-2.0 134.4L1454.0 665.9M-2.0 133.1L1454.0 664.6M-2.0 130.6L1454.0 662.1M-2.0 129.3L1454.0 660.8M-2.0 128.0L1454.0 659.5M-2.0 126.7L1454.0 658.2M-2.0 125.5L1454.0 656.9M-2.0 124.2L1454.0 655.7M-2.0 122.9L1454.0 654.4M-2.0 121.6L1454.0 653.1M-2.0 120.3L1454.0 651.8M-2.0 117.8L1454.0 649.2M-2.0 116.5L1454.0 648.0M-2.0 115.2L1454.0 646.7M-2.0 113.9L1454.0 645.4M-2.0 112.6L1454.0 644.1M-2.0 111.4L1454.0 642.8M-2.0 110.1L1454.0 641.6M-2.0 108.8L1454.0 640.3M-2.0 107.5L1454.0 639.0M-2.0 105.0L1454.0 636.4M-2.0 103.7L1454.0 635.1M-2.0 102.4L1454.0 633.9M-2.0 101.1L1454.0 632.6M-2.0 99.8L1454.0 631.3M-2.0 98.5L1454.0 630.0M-2.0 97.3L1454.0 628.7M-2.0 96.0L1454.0 627.5M-2.0 94.7L1454.0 626.2M-2.0 92.1L1454.0 623.6M-2.0 90.9L1454.0 622.3M-2.0 89.6L1454.0 621.0M-2.0 88.3L1454.0 619.8M-2.0 87.0L1454.0 618.5M-2.0 85.7L1454.0 617.2M-2.0 84.4L1454.0 615.9M-2.0 83.2L1454.0 614.6M-2.0 81.9L1454.0 613.4M-2.0 79.3L1454.0 610.8M-2.0 78.0L1454.0 609.5M-2.0 76.8L1454.0 608.2M-2.0 75.5L1454.0 606.9M-2.0 74.2L1454.0 605.7M-2.0 72.9L1454.0 604.4M-2.0 71.6L1454.0 603.1M-2.0 70.3L1454.0 601.8M-2.0 69.1L1454.0 600.5M-2.0 66.5L1454.0 598.0M0.1 66.0L1454.0 596.7M3.7 66.0L1454.0 595.4M7.2 66.0L1454.0 594.1M10.7 66.0L1454.0 592.8M14.2 66.0L1454.0 591.6M17.7 66.0L1454.0 590.3M21.2 66.0L1454.0 589.0M24.7 66.0L1454.0 587.7M31.7 66.0L1454.0 585.2M35.3 66.0L1454.0 583.9M38.8 66.0L1454.0 582.6M42.3 66.0L1454.0 581.3M45.8 66.0L1454.0 580.0M49.3 66.0L1454.0 578.7M52.8 66.0L1454.0 577.5M56.3 66.0L1454.0 576.2M59.8 66.0L1454.0 574.9M66.9 66.0L1454.0 572.3M70.4 66.0L1454.0 571.1M73.9 66.0L1454.0 569.8M77.4 66.0L1454.0 568.5M80.9 66.0L1454.0 567.2M84.4 66.0L1454.0 565.9M87.9 66.0L1454.0 564.6M91.4 66.0L1454.0 563.4M95.0 66.0L1454.0 562.1M102.0 66.0L1454.0 559.5M105.5 66.0L1454.0 558.2M109.0 66.0L1454.0 557.0M112.5 66.0L1454.0 555.7M116.0 66.0L1454.0 554.4M119.5 66.0L1454.0 553.1M123.0 66.0L1454.0 551.8M126.6 66.0L1454.0 550.5M130.1 66.0L1454.0 549.3M137.1 66.0L1454.0 546.7M140.6 66.0L1454.0 545.4M144.1 66.0L1454.0 544.1M147.6 66.0L1454.0 542.9M151.1 66.0L1454.0 541.6M154.6 66.0L1454.0 540.3M158.2 66.0L1454.0 539.0M161.7 66.0L1454.0 537.7M165.2 66.0L1454.0 536.4M172.2 66.0L1454.0 533.9M175.7 66.0L1454.0 532.6M179.2 66.0L1454.0 531.3M182.7 66.0L1454.0 530.0M186.2 66.0L1454.0 528.8M189.8 66.0L1454.0 527.5M193.3 66.0L1454.0 526.2M196.8 66.0L1454.0 524.9M200.3 66.0L1454.0 523.6M207.3 66.0L1454.0 521.1M210.8 66.0L1454.0 519.8M214.3 66.0L1454.0 518.5M217.9 66.0L1454.0 517.2M221.4 66.0L1454.0 515.9M224.9 66.0L1454.0 514.7M228.4 66.0L1454.0 513.4M231.9 66.0L1454.0 512.1M235.4 66.0L1454.0 510.8M242.4 66.0L1454.0 508.3M245.9 66.0L1454.0 507.0M249.5 66.0L1454.0 505.7M253.0 66.0L1454.0 504.4M256.5 66.0L1454.0 503.1M260.0 66.0L1454.0 501.8M263.5 66.0L1454.0 500.6M267.0 66.0L1454.0 499.3M270.5 66.0L1454.0 498.0M277.5 66.0L1454.0 495.4M281.1 66.0L1454.0 494.2M284.6 66.0L1454.0 492.9M288.1 66.0L1454.0 491.6M291.6 66.0L1454.0 490.3M295.1 66.0L1454.0 489.0M298.6 66.0L1454.0 487.7M302.1 66.0L1454.0 486.5M305.6 66.0L1454.0 485.2M312.7 66.0L1454.0 482.6M316.2 66.0L1454.0 481.3M319.7 66.0L1454.0 480.1M323.2 66.0L1454.0 478.8M326.7 66.0L1454.0 477.5M330.2 66.0L1454.0 476.2M333.7 66.0L1454.0 474.9M337.2 66.0L1454.0 473.6M340.7 66.0L1454.0 472.4M347.8 66.0L1454.0 469.8M351.3 66.0L1454.0 468.5M354.8 66.0L1454.0 467.2M358.3 66.0L1454.0 466.0M361.8 66.0L1454.0 464.7M365.3 66.0L1454.0 463.4M368.8 66.0L1454.0 462.1M372.4 66.0L1454.0 460.8M375.9 66.0L1454.0 459.5M382.9 66.0L1454.0 457.0M386.4 66.0L1454.0 455.7M389.9 66.0L1454.0 454.4M393.4 66.0L1454.0 453.1M396.9 66.0L1454.0 451.9M400.4 66.0L1454.0 450.6M404.0 66.0L1454.0 449.3M407.5 66.0L1454.0 448.0M411.0 66.0L1454.0 446.7M418.0 66.0L1454.0 444.2M421.5 66.0L1454.0 442.9M425.0 66.0L1454.0 441.6M428.5 66.0L1454.0 440.3M432.0 66.0L1454.0 439.0M435.6 66.0L1454.0 437.8M439.1 66.0L1454.0 436.5M442.6 66.0L1454.0 435.2M446.1 66.0L1454.0 433.9M453.1 66.0L1454.0 431.3M456.6 66.0L1454.0 430.1M460.1 66.0L1454.0 428.8M463.6 66.0L1454.0 427.5M467.2 66.0L1454.0 426.2M470.7 66.0L1454.0 424.9M474.2 66.0L1454.0 423.7M477.7 66.0L1454.0 422.4M481.2 66.0L1454.0 421.1M488.2 66.0L1454.0 418.5M491.7 66.0L1454.0 417.2M495.2 66.0L1454.0 416.0M498.8 66.0L1454.0 414.7M502.3 66.0L1454.0 413.4M505.8 66.0L1454.0 412.1M509.3 66.0L1454.0 410.8M512.8 66.0L1454.0 409.6M516.3 66.0L1454.0 408.3M523.3 66.0L1454.0 405.7M526.9 66.0L1454.0 404.4M530.4 66.0L1454.0 403.1M533.9 66.0L1454.0 401.9M537.4 66.0L1454.0 400.6M540.9 66.0L1454.0 399.3M544.4 66.0L1454.0 398.0M547.9 66.0L1454.0 396.7M551.4 66.0L1454.0 395.5M558.5 66.0L1454.0 392.9M562.0 66.0L1454.0 391.6M565.5 66.0L1454.0 390.3M569.0 66.0L1454.0 389.1M572.5 66.0L1454.0 387.8M576.0 66.0L1454.0 386.5M579.5 66.0L1454.0 385.2M583.0 66.0L1454.0 383.9M586.5 66.0L1454.0 382.6M593.6 66.0L1454.0 380.1M597.1 66.0L1454.0 378.8M600.6 66.0L1454.0 377.5M604.1 66.0L1454.0 376.2M607.6 66.0L1454.0 375.0M611.1 66.0L1454.0 373.7M614.6 66.0L1454.0 372.4M618.1 66.0L1454.0 371.1M621.7 66.0L1454.0 369.8M628.7 66.0L1454.0 367.3M632.2 66.0L1454.0 366.0M635.7 66.0L1454.0 364.7M639.2 66.0L1454.0 363.4M642.7 66.0L1454.0 362.1M646.2 66.0L1454.0 360.9M649.7 66.0L1454.0 359.6M653.3 66.0L1454.0 358.3M656.8 66.0L1454.0 357.0M663.8 66.0L1454.0 354.4M667.3 66.0L1454.0 353.2M670.8 66.0L1454.0 351.9M674.3 66.0L1454.0 350.6M677.8 66.0L1454.0 349.3M681.4 66.0L1454.0 348.0M684.9 66.0L1454.0 346.8M688.4 66.0L1454.0 345.5M691.9 66.0L1454.0 344.2M698.9 66.0L1454.0 341.6M702.4 66.0L1454.0 340.3M705.9 66.0L1454.0 339.1M709.4 66.0L1454.0 337.8M713.0 66.0L1454.0 336.5M716.5 66.0L1454.0 335.2M720.0 66.0L1454.0 333.9M723.5 66.0L1454.0 332.7M727.0 66.0L1454.0 331.4M734.0 66.0L1454.0 328.8M737.5 66.0L1454.0 327.5M741.0 66.0L1454.0 326.2M744.6 66.0L1454.0 325.0M748.1 66.0L1454.0 323.7M751.6 66.0L1454.0 322.4M755.1 66.0L1454.0 321.1M758.6 66.0L1454.0 319.8M762.1 66.0L1454.0 318.6M769.1 66.0L1454.0 316.0M772.6 66.0L1454.0 314.7M776.2 66.0L1454.0 313.4M779.7 66.0L1454.0 312.1M783.2 66.0L1454.0 310.9M786.7 66.0L1454.0 309.6M790.2 66.0L1454.0 308.3M793.7 66.0L1454.0 307.0M797.2 66.0L1454.0 305.7M804.3 66.0L1454.0 303.2M807.8 66.0L1454.0 301.9M811.3 66.0L1454.0 300.6M814.8 66.0L1454.0 299.3M818.3 66.0L1454.0 298.0M821.8 66.0L1454.0 296.8M825.3 66.0L1454.0 295.5M828.8 66.0L1454.0 294.2M832.3 66.0L1454.0 292.9M839.4 66.0L1454.0 290.4M842.9 66.0L1454.0 289.1M846.4 66.0L1454.0 287.8M849.9 66.0L1454.0 286.5M853.4 66.0L1454.0 285.2M856.9 66.0L1454.0 283.9M860.4 66.0L1454.0 282.7M863.9 66.0L1454.0 281.4M867.5 66.0L1454.0 280.1M874.5 66.0L1454.0 277.5M878.0 66.0L1454.0 276.3M881.5 66.0L1454.0 275.0M885.0 66.0L1454.0 273.7M888.5 66.0L1454.0 272.4M892.0 66.0L1454.0 271.1M895.5 66.0L1454.0 269.8M899.1 66.0L1454.0 268.6M902.6 66.0L1454.0 267.3M909.6 66.0L1454.0 264.7M913.1 66.0L1454.0 263.4M916.6 66.0L1454.0 262.2M920.1 66.0L1454.0 260.9M923.6 66.0L1454.0 259.6M927.1 66.0L1454.0 258.3M930.7 66.0L1454.0 257.0M934.2 66.0L1454.0 255.7M937.7 66.0L1454.0 254.5M944.7 66.0L1454.0 251.9M948.2 66.0L1454.0 250.6M951.7 66.0L1454.0 249.3M955.2 66.0L1454.0 248.1M958.8 66.0L1454.0 246.8M962.3 66.0L1454.0 245.5M965.8 66.0L1454.0 244.2M969.3 66.0L1454.0 242.9M972.8 66.0L1454.0 241.7M979.8 66.0L1454.0 239.1M983.3 66.0L1454.0 237.8M986.8 66.0L1454.0 236.5M990.4 66.0L1454.0 235.2M993.9 66.0L1454.0 234.0M997.4 66.0L1454.0 232.7M1000.9 66.0L1454.0 231.4M1004.4 66.0L1454.0 230.1M1007.9 66.0L1454.0 228.8M1014.9 66.0L1454.0 226.3M1018.4 66.0L1454.0 225.0M1022.0 66.0L1454.0 223.7M1025.5 66.0L1454.0 222.4M1029.0 66.0L1454.0 221.1M1032.5 66.0L1454.0 219.9M1036.0 66.0L1454.0 218.6M1039.5 66.0L1454.0 217.3M1043.0 66.0L1454.0 216.0M1050.0 66.0L1454.0 213.5M1053.6 66.0L1454.0 212.2M1057.1 66.0L1454.0 210.9M1060.6 66.0L1454.0 209.6M1064.1 66.0L1454.0 208.3M1067.6 66.0L1454.0 207.0M1071.1 66.0L1454.0 205.8M1074.6 66.0L1454.0 204.5M1078.1 66.0L1454.0 203.2M1085.2 66.0L1454.0 200.6M1088.7 66.0L1454.0 199.4M1092.2 66.0L1454.0 198.1M1095.7 66.0L1454.0 196.8M1099.2 66.0L1454.0 195.5M1102.7 66.0L1454.0 194.2M1106.2 66.0L1454.0 192.9M1109.7 66.0L1454.0 191.7M1113.3 66.0L1454.0 190.4M1120.3 66.0L1454.0 187.8M1123.8 66.0L1454.0 186.5M1127.3 66.0L1454.0 185.3M1130.8 66.0L1454.0 184.0M1134.3 66.0L1454.0 182.7M1137.8 66.0L1454.0 181.4M1141.3 66.0L1454.0 180.1M1144.9 66.0L1454.0 178.8M1148.4 66.0L1454.0 177.6M1155.4 66.0L1454.0 175.0M1158.9 66.0L1454.0 173.7M1162.4 66.0L1454.0 172.4M1165.9 66.0L1454.0 171.2M1169.4 66.0L1454.0 169.9M1172.9 66.0L1454.0 168.6M1176.5 66.0L1454.0 167.3M1180.0 66.0L1454.0 166.0M1183.5 66.0L1454.0 164.7M1190.5 66.0L1454.0 162.2M1194.0 66.0L1454.0 160.9M1197.5 66.0L1454.0 159.6M1201.0 66.0L1454.0 158.3M1204.5 66.0L1454.0 157.1M1208.1 66.0L1454.0 155.8M1211.6 66.0L1454.0 154.5M1215.1 66.0L1454.0 153.2M1218.6 66.0L1454.0 151.9M1225.6 66.0L1454.0 149.4M1229.1 66.0L1454.0 148.1M1232.6 66.0L1454.0 146.8M1236.1 66.0L1454.0 145.5M1239.7 66.0L1454.0 144.2M1243.2 66.0L1454.0 143.0M1246.7 66.0L1454.0 141.7M1250.2 66.0L1454.0 140.4M1253.7 66.0L1454.0 139.1M1260.7 66.0L1454.0 136.5M1264.2 66.0L1454.0 135.3M1267.8 66.0L1454.0 134.0M1271.3 66.0L1454.0 132.7M1274.8 66.0L1454.0 131.4M1278.3 66.0L1454.0 130.1M1281.8 66.0L1454.0 128.9M1285.3 66.0L1454.0 127.6M1288.8 66.0L1454.0 126.3M1295.8 66.0L1454.0 123.7M1299.4 66.0L1454.0 122.4M1302.9 66.0L1454.0 121.2M1306.4 66.0L1454.0 119.9M1309.9 66.0L1454.0 118.6M1313.4 66.0L1454.0 117.3M1316.9 66.0L1454.0 116.0M1320.4 66.0L1454.0 114.8M1323.9 66.0L1454.0 113.5M1331.0 66.0L1454.0 110.9M1334.5 66.0L1454.0 109.6M1338.0 66.0L1454.0 108.4M1341.5 66.0L1454.0 107.1M1345.0 66.0L1454.0 105.8M1348.5 66.0L1454.0 104.5M1352.0 66.0L1454.0 103.2M1355.5 66.0L1454.0 101.9M1359.0 66.0L1454.0 100.7M1366.1 66.0L1454.0 98.1M1369.6 66.0L1454.0 96.8M1373.1 66.0L1454.0 95.5M1376.6 66.0L1454.0 94.3M1380.1 66.0L1454.0 93.0M1383.6 66.0L1454.0 91.7M1387.1 66.0L1454.0 90.4M1390.6 66.0L1454.0 89.1M1394.2 66.0L1454.0 87.8M1401.2 66.0L1454.0 85.3M1404.7 66.0L1454.0 84.0M1408.2 66.0L1454.0 82.7M1411.7 66.0L1454.0 81.4M1415.2 66.0L1454.0 80.2M1418.7 66.0L1454.0 78.9M1422.3 66.0L1454.0 77.6M1425.8 66.0L1454.0 76.3M1429.3 66.0L1454.0 75.0M1436.3 66.0L1454.0 72.5M1439.8 66.0L1454.0 71.2M1443.3 66.0L1454.0 69.9M1446.8 66.0L1454.0 68.6M1450.3 66.0L1454.0 67.3M1453.9 66.0L1454.0 66.1" stroke="#8c8c8c" stroke-opacity=".19" stroke-width=".45"/>
<path d="M-2.0 77.3L44.4 66.0M-2.0 88.7L91.6 66.0M-2.0 100.2L138.9 66.0M-2.0 111.7L186.1 66.0M-2.0 123.1L233.4 66.0M-2.0 134.6L280.6 66.0M-2.0 146.1L327.9 66.0M-2.0 157.5L375.1 66.0M-2.0 169.0L422.4 66.0M-2.0 180.5L469.6 66.0M-2.0 191.9L516.9 66.0M-2.0 203.4L564.1 66.0M-2.0 214.9L611.3 66.0M-2.0 226.3L658.6 66.0M-2.0 237.8L705.8 66.0M-2.0 249.3L753.1 66.0M-2.0 260.7L800.3 66.0M-2.0 272.2L847.6 66.0M-2.0 283.7L894.8 66.0M-2.0 295.2L942.1 66.0M-2.0 306.6L989.3 66.0M-2.0 318.1L1036.6 66.0M-2.0 329.6L1083.8 66.0M-2.0 341.0L1131.1 66.0M-2.0 352.5L1178.3 66.0M-2.0 364.0L1225.6 66.0M-2.0 375.4L1272.8 66.0M-2.0 386.9L1320.1 66.0M-2.0 398.4L1367.3 66.0M-2.0 409.8L1414.6 66.0M-2.0 421.3L1454.0 67.9M-2.0 432.8L1454.0 79.4M-2.0 444.2L1454.0 90.8M-2.0 455.7L1454.0 102.3M-2.0 467.2L1454.0 113.8M-2.0 478.6L1454.0 125.2M-2.0 490.1L1454.0 136.7M-2.0 501.6L1454.0 148.2M-2.0 513.0L1454.0 159.6M-2.0 524.5L1454.0 171.1M-2.0 536.0L1454.0 182.6M-2.0 547.4L1454.0 194.0M-2.0 558.9L1454.0 205.5M-2.0 570.4L1454.0 217.0M-2.0 581.9L1454.0 228.5M-2.0 593.3L1454.0 239.9M-2.0 604.8L1454.0 251.4M-2.0 616.3L1454.0 262.9M-2.0 627.7L1454.0 274.3M-2.0 639.2L1454.0 285.8M-2.0 650.7L1454.0 297.3M-2.0 662.1L1454.0 308.7M-2.0 673.6L1454.0 320.2M-2.0 685.1L1454.0 331.7M-2.0 696.5L1454.0 343.1M-2.0 708.0L1454.0 354.6M-0.6 719.1L1454.0 366.1M18.2 726.0L1454.0 377.5M37.1 732.9L1454.0 389.0M56.0 739.8L1454.0 400.5M74.8 746.7L1454.0 411.9M93.7 753.6L1454.0 423.4M139.2 754.0L1454.0 434.9M186.5 754.0L1454.0 446.3M233.7 754.0L1454.0 457.8M281.0 754.0L1454.0 469.3M328.2 754.0L1454.0 480.8M375.5 754.0L1454.0 492.2M422.7 754.0L1454.0 503.7M470.0 754.0L1454.0 515.2M517.2 754.0L1454.0 526.6M564.5 754.0L1454.0 538.1M611.7 754.0L1454.0 549.6M659.0 754.0L1454.0 561.0M706.2 754.0L1454.0 572.5M753.5 754.0L1454.0 584.0M800.7 754.0L1454.0 595.4M848.0 754.0L1454.0 606.9M895.2 754.0L1454.0 618.4M942.5 754.0L1454.0 629.8M989.7 754.0L1454.0 641.3M1037.0 754.0L1454.0 652.8M1084.2 754.0L1454.0 664.2M1131.4 754.0L1454.0 675.7M1178.7 754.0L1454.0 687.2M1225.9 754.0L1454.0 698.6M1273.2 754.0L1454.0 710.1M1320.4 754.0L1454.0 721.6M1367.7 754.0L1454.0 733.1M1414.9 754.0L1454.0 744.5" stroke="#808080" stroke-opacity=".46" stroke-width=".8"/>
<path d="M-2.0 708.6L122.2 754.0M-2.0 695.8L157.4 754.0M-2.0 683.0L192.5 754.0M-2.0 670.2L227.6 754.0M-2.0 657.4L262.7 754.0M-2.0 644.6L297.8 754.0M-2.0 631.7L332.9 754.0M-2.0 618.9L368.0 754.0M-2.0 606.1L403.2 754.0M-2.0 593.3L438.3 754.0M-2.0 580.5L473.4 754.0M-2.0 567.7L508.5 754.0M-2.0 554.8L543.6 754.0M-2.0 542.0L578.7 754.0M-2.0 529.2L613.8 754.0M-2.0 516.4L649.0 754.0M-2.0 503.6L684.1 754.0M-2.0 490.8L719.2 754.0M-2.0 477.9L754.3 754.0M-2.0 465.1L789.4 754.0M-2.0 452.3L824.5 754.0M-2.0 439.5L859.6 754.0M-2.0 426.7L894.7 754.0M-2.0 413.8L929.9 754.0M-2.0 401.0L965.0 754.0M-2.0 388.2L1000.1 754.0M-2.0 375.4L1035.2 754.0M-2.0 362.6L1070.3 754.0M-2.0 349.8L1105.4 754.0M-2.0 336.9L1140.5 754.0M-2.0 324.1L1175.7 754.0M-2.0 311.3L1210.8 754.0M-2.0 298.5L1245.9 754.0M-2.0 285.7L1281.0 754.0M-2.0 272.9L1316.1 754.0M-2.0 260.0L1351.2 754.0M-2.0 247.2L1386.3 754.0M-2.0 234.4L1421.5 754.0M-2.0 221.6L1454.0 753.1M-2.0 208.8L1454.0 740.2M-2.0 196.0L1454.0 727.4M-2.0 183.1L1454.0 714.6M-2.0 170.3L1454.0 701.8M-2.0 157.5L1454.0 689.0M-2.0 144.7L1454.0 676.2M-2.0 131.9L1454.0 663.3M-2.0 119.0L1454.0 650.5M-2.0 106.2L1454.0 637.7M-2.0 93.4L1454.0 624.9M-2.0 80.6L1454.0 612.1M-2.0 67.8L1454.0 599.3M28.2 66.0L1454.0 586.4M63.4 66.0L1454.0 573.6M98.5 66.0L1454.0 560.8M133.6 66.0L1454.0 548.0M168.7 66.0L1454.0 535.2M203.8 66.0L1454.0 522.4M238.9 66.0L1454.0 509.5M274.0 66.0L1454.0 496.7M309.1 66.0L1454.0 483.9M344.3 66.0L1454.0 471.1M379.4 66.0L1454.0 458.3M414.5 66.0L1454.0 445.4M449.6 66.0L1454.0 432.6M484.7 66.0L1454.0 419.8M519.8 66.0L1454.0 407.0M554.9 66.0L1454.0 394.2M590.1 66.0L1454.0 381.4M625.2 66.0L1454.0 368.5M660.3 66.0L1454.0 355.7M695.4 66.0L1454.0 342.9M730.5 66.0L1454.0 330.1M765.6 66.0L1454.0 317.3M800.7 66.0L1454.0 304.5M835.9 66.0L1454.0 291.6M871.0 66.0L1454.0 278.8M906.1 66.0L1454.0 266.0M941.2 66.0L1454.0 253.2M976.3 66.0L1454.0 240.4M1011.4 66.0L1454.0 227.6M1046.5 66.0L1454.0 214.7M1081.6 66.0L1454.0 201.9M1116.8 66.0L1454.0 189.1M1151.9 66.0L1454.0 176.3M1187.0 66.0L1454.0 163.5M1222.1 66.0L1454.0 150.6M1257.2 66.0L1454.0 137.8M1292.3 66.0L1454.0 125.0M1327.4 66.0L1454.0 112.2M1362.6 66.0L1454.0 99.4M1397.7 66.0L1454.0 86.6M1432.8 66.0L1454.0 73.7" stroke="#808080" stroke-opacity=".46" stroke-width=".8"/>
</g>
<path d="M-2 718.6 L94.9 754.0" stroke="#6e6e6e" stroke-width="1.2" fill="none"/>
<defs>
<clipPath id="objclip"><path d="M568.6 355.7C568.9 355.1 569.1 353.4 570.3 352.0C571.5 350.6 573.1 349.4 575.7 347.6C578.4 345.8 581.8 343.7 586.2 341.3C590.6 338.9 596.2 336.1 601.9 333.5C607.6 330.9 617.2 327.1 620.2 325.8L732.8 297.8C735.7 297.3 743.9 295.7 750.0 294.8C756.1 293.9 761.8 293.1 769.4 292.2C777.0 291.3 786.9 290.3 795.6 289.7C804.3 289.1 813.1 288.6 821.8 288.5C830.5 288.4 839.3 288.3 848.0 289.0C856.7 289.7 865.4 290.6 874.1 292.6C882.8 294.6 893.8 298.2 900.3 300.9C906.8 303.6 910.3 306.6 913.4 308.8C916.5 311.0 917.5 312.7 918.6 314.2C919.7 315.7 919.7 317.4 919.9 318.0L928.8 400.0L936.9 477.7C936.8 478.5 937.6 480.4 936.0 482.5C934.4 484.6 931.5 487.5 927.2 490.4C922.9 493.3 917.7 496.3 910.2 500.0C902.7 503.7 886.8 510.7 882.1 512.8L759.6 542.1C755.1 542.9 744.4 545.2 732.8 546.8C721.2 548.4 704.4 550.5 690.2 551.5C676.0 552.5 660.1 552.8 647.7 552.8C635.3 552.8 624.6 552.1 615.7 551.5C606.8 550.9 601.6 550.4 594.5 548.9C587.4 547.4 580.0 545.2 573.2 542.6C566.5 540.0 559.0 536.0 554.0 533.0C549.0 530.0 545.6 527.3 543.4 524.5C541.2 521.7 541.1 517.4 540.6 516.0L559.4 400.0Z"/></clipPath>
<linearGradient id="gleft" gradientUnits="userSpaceOnUse" x1="551.5" y1="0" x2="756" y2="0" gradientTransform="matrix(1 0 -0.1 1 45 0)">
<stop offset="0" stop-color="#31312e"/><stop offset=".022" stop-color="#343431"/><stop offset=".045" stop-color="#2a2a28"/><stop offset=".071" stop-color="#222220"/><stop offset=".1" stop-color="#232321"/><stop offset=".125" stop-color="#343431"/><stop offset=".146" stop-color="#2d2d2a"/><stop offset=".17" stop-color="#1f1f1d"/><stop offset=".315" stop-color="#1e1e1c"/><stop offset=".345" stop-color="#2c2c29"/><stop offset=".364" stop-color="#383833"/><stop offset=".384" stop-color="#2b2b28"/><stop offset=".43" stop-color="#272724"/><stop offset="1" stop-color="#262522"/>
</linearGradient>
<linearGradient id="gright" gradientUnits="userSpaceOnUse" x1="872" y1="0" x2="932" y2="0" gradientTransform="matrix(1 0 0.07 1 -29 0)">
<stop offset="0" stop-color="#3a3a35"/><stop offset=".7" stop-color="#3a3a35"/><stop offset=".77" stop-color="#464642"/><stop offset=".83" stop-color="#484844"/><stop offset=".92" stop-color="#3a3a36"/><stop offset="1" stop-color="#30302d"/>
</linearGradient>
<linearGradient id="gslotr" gradientUnits="userSpaceOnUse" x1="688" y1="0" x2="704" y2="0"><stop offset="0" stop-color="#2f2e2b"/><stop offset=".45" stop-color="#4a4a46"/><stop offset=".8" stop-color="#66665f"/><stop offset="1" stop-color="#55554f"/></linearGradient>
<linearGradient id="gslotl" gradientUnits="userSpaceOnUse" x1="619" y1="0" x2="631" y2="0"><stop offset="0" stop-color="#55554f"/><stop offset=".6" stop-color="#3c3c38"/><stop offset="1" stop-color="#2f2e2b"/></linearGradient>
</defs>
<g id="obj">
<path d="M568.6 355.7C568.9 355.1 569.1 353.4 570.3 352.0C571.5 350.6 573.1 349.4 575.7 347.6C578.4 345.8 581.8 343.7 586.2 341.3C590.6 338.9 596.2 336.1 601.9 333.5C607.6 330.9 617.2 327.1 620.2 325.8L732.8 297.8C735.7 297.3 743.9 295.7 750.0 294.8C756.1 293.9 761.8 293.1 769.4 292.2C777.0 291.3 786.9 290.3 795.6 289.7C804.3 289.1 813.1 288.6 821.8 288.5C830.5 288.4 839.3 288.3 848.0 289.0C856.7 289.7 865.4 290.6 874.1 292.6C882.8 294.6 893.8 298.2 900.3 300.9C906.8 303.6 910.3 306.6 913.4 308.8C916.5 311.0 917.5 312.7 918.6 314.2C919.7 315.7 919.7 317.4 919.9 318.0L928.8 400.0L936.9 477.7C936.8 478.5 937.6 480.4 936.0 482.5C934.4 484.6 931.5 487.5 927.2 490.4C922.9 493.3 917.7 496.3 910.2 500.0C902.7 503.7 886.8 510.7 882.1 512.8L759.6 542.1C755.1 542.9 744.4 545.2 732.8 546.8C721.2 548.4 704.4 550.5 690.2 551.5C676.0 552.5 660.1 552.8 647.7 552.8C635.3 552.8 624.6 552.1 615.7 551.5C606.8 550.9 601.6 550.4 594.5 548.9C587.4 547.4 580.0 545.2 573.2 542.6C566.5 540.0 559.0 536.0 554.0 533.0C549.0 530.0 545.6 527.3 543.4 524.5C541.2 521.7 541.1 517.4 540.6 516.0L559.4 400.0Z" fill="#262522"/>
<path d="M752.5 375.5C746.6 376.4 727.3 379.3 717.0 380.6C706.7 381.9 699.6 382.8 690.9 383.4C682.2 384.0 673.4 384.2 664.7 384.0C656.0 383.8 647.2 383.3 638.5 382.4C629.8 381.5 621.1 380.3 612.4 378.4C603.7 376.5 592.9 373.6 586.2 371.2C579.5 368.8 575.1 365.9 572.2 364.0C569.3 362.1 569.4 360.9 568.8 359.5C568.2 358.1 568.6 356.3 568.6 355.7L559.4 400.0L540.6 516.0C541.1 517.4 541.2 521.7 543.4 524.5C545.6 527.3 549.0 530.0 554.0 533.0C559.0 536.0 566.5 540.0 573.2 542.6C580.0 545.2 587.4 547.4 594.5 548.9C601.6 550.4 606.8 550.9 615.7 551.5C624.6 552.1 635.3 552.8 647.7 552.8C660.1 552.8 676.0 552.5 690.2 551.5C704.4 550.5 721.2 548.4 732.8 546.8C744.4 545.2 755.1 542.9 759.6 542.1Z" fill="url(#gleft)"/>
<path d="M752.5 375.5L870.9 347.0L882.1 512.8L759.6 542.1Z" fill="#262522"/>
<path d="M870.9 347.0C875.7 344.8 893.6 336.6 899.6 333.8C905.6 331.0 904.3 331.2 906.8 330.0C909.3 328.8 912.8 327.6 914.8 326.3C916.8 325.1 917.8 323.9 918.6 322.5C919.5 321.1 919.7 318.8 919.9 318.0L928.8 400.0L936.9 477.7C936.8 478.5 937.6 480.4 936.0 482.5C934.4 484.6 931.5 487.5 927.2 490.4C922.9 493.3 917.7 496.3 910.2 500.0C902.7 503.7 886.8 510.7 882.1 512.8Z" fill="url(#gright)"/>
<path d="M568.6 355.7C568.9 355.1 569.1 353.4 570.3 352.0C571.5 350.6 573.1 349.4 575.7 347.6C578.4 345.8 581.8 343.7 586.2 341.3C590.6 338.9 596.2 336.1 601.9 333.5C607.6 330.9 617.2 327.1 620.2 325.8L732.8 297.8C735.7 297.3 743.9 295.7 750.0 294.8C756.1 293.9 761.8 293.1 769.4 292.2C777.0 291.3 786.9 290.3 795.6 289.7C804.3 289.1 813.1 288.6 821.8 288.5C830.5 288.4 839.3 288.3 848.0 289.0C856.7 289.7 865.4 290.6 874.1 292.6C882.8 294.6 893.8 298.2 900.3 300.9C906.8 303.6 910.3 306.6 913.4 308.8C916.5 311.0 917.5 312.7 918.6 314.2C919.7 315.7 919.7 317.4 919.9 318.0C919.7 318.8 919.5 321.1 918.6 322.5C917.8 323.9 916.8 325.1 914.8 326.3C912.8 327.6 909.3 328.8 906.8 330.0C904.3 331.2 905.6 331.0 899.6 333.8C893.6 336.6 875.7 344.8 870.9 347.0L752.5 375.5C746.6 376.4 727.3 379.3 717.0 380.6C706.7 381.9 699.6 382.8 690.9 383.4C682.2 384.0 673.4 384.2 664.7 384.0C656.0 383.8 647.2 383.3 638.5 382.4C629.8 381.5 621.1 380.3 612.4 378.4C603.7 376.5 592.9 373.6 586.2 371.2C579.5 368.8 575.1 365.9 572.2 364.0C569.3 362.1 569.4 360.9 568.8 359.5C568.2 358.1 568.6 356.3 568.6 355.7Z" fill="#5a5a54"/>
<clipPath id="topclip"><path d="M568.6 355.7C568.9 355.1 569.1 353.4 570.3 352.0C571.5 350.6 573.1 349.4 575.7 347.6C578.4 345.8 581.8 343.7 586.2 341.3C590.6 338.9 596.2 336.1 601.9 333.5C607.6 330.9 617.2 327.1 620.2 325.8L732.8 297.8C735.7 297.3 743.9 295.7 750.0 294.8C756.1 293.9 761.8 293.1 769.4 292.2C777.0 291.3 786.9 290.3 795.6 289.7C804.3 289.1 813.1 288.6 821.8 288.5C830.5 288.4 839.3 288.3 848.0 289.0C856.7 289.7 865.4 290.6 874.1 292.6C882.8 294.6 893.8 298.2 900.3 300.9C906.8 303.6 910.3 306.6 913.4 308.8C916.5 311.0 917.5 312.7 918.6 314.2C919.7 315.7 919.7 317.4 919.9 318.0C919.7 318.8 919.5 321.1 918.6 322.5C917.8 323.9 916.8 325.1 914.8 326.3C912.8 327.6 909.3 328.8 906.8 330.0C904.3 331.2 905.6 331.0 899.6 333.8C893.6 336.6 875.7 344.8 870.9 347.0L752.5 375.5C746.6 376.4 727.3 379.3 717.0 380.6C706.7 381.9 699.6 382.8 690.9 383.4C682.2 384.0 673.4 384.2 664.7 384.0C656.0 383.8 647.2 383.3 638.5 382.4C629.8 381.5 621.1 380.3 612.4 378.4C603.7 376.5 592.9 373.6 586.2 371.2C579.5 368.8 575.1 365.9 572.2 364.0C569.3 362.1 569.4 360.9 568.8 359.5C568.2 358.1 568.6 356.3 568.6 355.7Z"/></clipPath>
<g clip-path="url(#topclip)" fill="none" stroke="#2e2e2a" stroke-opacity=".22" stroke-width=".9"><path d="M535.0 291.0L559.5 285.0M535.0 302.4L606.8 285.0M535.0 313.9L654.0 285.0M535.0 325.4L701.3 285.0M535.0 336.8L748.5 285.0M535.0 348.3L795.8 285.0M535.0 359.8L843.0 285.0M535.0 371.2L890.3 285.0M535.0 382.7L937.5 285.0M535.0 394.2L940.0 295.9M535.0 405.6L940.0 307.3M535.0 417.1L940.0 318.8M535.0 428.6L940.0 330.3M535.0 440.0L940.0 341.7M535.0 451.5L940.0 353.2M535.0 463.0L940.0 364.7M535.0 474.4L940.0 376.1M535.0 485.9L940.0 387.6M535.0 497.4L940.0 399.1M535.0 508.9L940.0 410.6M535.0 520.3L940.0 422.0M535.0 531.8L940.0 433.5M535.0 543.3L940.0 445.0M535.0 554.7L940.0 456.4M577.0 556.0L940.0 467.9M624.2 556.0L940.0 479.4M671.5 556.0L940.0 490.8M718.7 556.0L940.0 502.3M766.0 556.0L940.0 513.8M813.2 556.0L940.0 525.2M860.5 556.0L940.0 536.7M907.7 556.0L940.0 548.2"/><path d="M535.0 545.8L563.0 556.0M535.0 533.0L598.1 556.0M535.0 520.1L633.2 556.0M535.0 507.3L668.3 556.0M535.0 494.5L703.5 556.0M535.0 481.7L738.6 556.0M535.0 468.9L773.7 556.0M535.0 456.1L808.8 556.0M535.0 443.2L843.9 556.0M535.0 430.4L879.0 556.0M535.0 417.6L914.1 556.0M535.0 404.8L940.0 552.6M535.0 392.0L940.0 539.8M535.0 379.2L940.0 527.0M535.0 366.3L940.0 514.2M535.0 353.5L940.0 501.4M535.0 340.7L940.0 488.5M535.0 327.9L940.0 475.7M535.0 315.1L940.0 462.9M535.0 302.3L940.0 450.1M535.0 289.4L940.0 437.3M558.0 285.0L940.0 424.5M593.1 285.0L940.0 411.6M628.2 285.0L940.0 398.8M663.3 285.0L940.0 386.0M698.4 285.0L940.0 373.2M733.5 285.0L940.0 360.4M768.7 285.0L940.0 347.5M803.8 285.0L940.0 334.7M838.9 285.0L940.0 321.9M874.0 285.0L940.0 309.1M909.1 285.0L940.0 296.3"/></g>
<g id="slot">
<path d="M619.0 360.3C618.8 359.2 620.5 358.5 622.0 357.6C623.5 356.7 621.0 356.9 628.0 354.9C635.0 352.9 656.4 347.6 664.2 345.8C672.0 344.0 670.8 344.1 675.0 344.0C679.2 343.9 685.3 344.4 689.5 345.1C693.7 345.8 698.0 347.2 700.4 348.4C702.8 349.5 703.9 350.9 704.1 352.0C704.3 353.1 703.0 354.1 701.8 354.9C700.6 355.7 702.5 355.2 696.8 356.7C691.1 358.2 675.0 362.1 667.8 363.9C660.6 365.6 657.6 366.6 653.4 367.2C649.2 367.8 646.1 367.7 642.5 367.6C638.9 367.5 635.0 367.1 631.7 366.5C628.5 365.9 625.1 364.9 623.0 363.9C620.9 362.9 619.2 361.4 619.0 360.3Z" fill="#232220"/>
<clipPath id="slotclip"><path d="M619.0 360.3C618.8 359.2 620.5 358.5 622.0 357.6C623.5 356.7 621.0 356.9 628.0 354.9C635.0 352.9 656.4 347.6 664.2 345.8C672.0 344.0 670.8 344.1 675.0 344.0C679.2 343.9 685.3 344.4 689.5 345.1C693.7 345.8 698.0 347.2 700.4 348.4C702.8 349.5 703.9 350.9 704.1 352.0C704.3 353.1 703.0 354.1 701.8 354.9C700.6 355.7 702.5 355.2 696.8 356.7C691.1 358.2 675.0 362.1 667.8 363.9C660.6 365.6 657.6 366.6 653.4 367.2C649.2 367.8 646.1 367.7 642.5 367.6C638.9 367.5 635.0 367.1 631.7 366.5C628.5 365.9 625.1 364.9 623.0 363.9C620.9 362.9 619.2 361.4 619.0 360.3Z"/></clipPath>
<g clip-path="url(#slotclip)">
<path d="M610 372L630.2 362.1L667.8 352.4Q682 350.6 693.2 353.4L698.2 356L712 350V335H610z" fill="#2f2e2b"/>
<path d="M686 343L689 353Q696 354 698.4 356.2L708 356V343z" fill="url(#gslotr)"/>
<path d="M615 352L627.4 355.6L631 362.1L631.3 368H615z" fill="url(#gslotl)"/>
<path d="M630.2 362.1L667.8 352.4Q682 350.6 693.2 353.4L698.6 356.4M665 345.6L668.6 352.4V364M627.4 355.4L631 362.1L631.4 366.6" fill="none" stroke="#0a0a0a" stroke-width=".9"/>
</g>
<path d="M619.0 360.3C618.8 359.2 620.5 358.5 622.0 357.6C623.5 356.7 621.0 356.9 628.0 354.9C635.0 352.9 656.4 347.6 664.2 345.8C672.0 344.0 670.8 344.1 675.0 344.0C679.2 343.9 685.3 344.4 689.5 345.1C693.7 345.8 698.0 347.2 700.4 348.4C702.8 349.5 703.9 350.9 704.1 352.0C704.3 353.1 703.0 354.1 701.8 354.9C700.6 355.7 702.5 355.2 696.8 356.7C691.1 358.2 675.0 362.1 667.8 363.9C660.6 365.6 657.6 366.6 653.4 367.2C649.2 367.8 646.1 367.7 642.5 367.6C638.9 367.5 635.0 367.1 631.7 366.5C628.5 365.9 625.1 364.9 623.0 363.9C620.9 362.9 619.2 361.4 619.0 360.3Z" fill="none" stroke="#080808" stroke-width="1.1"/>
</g>
<use href="#slot" transform="translate(164.4 -40)"/>
<path d="M568.6 355.7C568.9 355.1 569.1 353.4 570.3 352.0C571.5 350.6 573.1 349.4 575.7 347.6C578.4 345.8 581.8 343.7 586.2 341.3C590.6 338.9 596.2 336.1 601.9 333.5C607.6 330.9 617.2 327.1 620.2 325.8L732.8 297.8C735.7 297.3 743.9 295.7 750.0 294.8C756.1 293.9 761.8 293.1 769.4 292.2C777.0 291.3 786.9 290.3 795.6 289.7C804.3 289.1 813.1 288.6 821.8 288.5C830.5 288.4 839.3 288.3 848.0 289.0C856.7 289.7 865.4 290.6 874.1 292.6C882.8 294.6 893.8 298.2 900.3 300.9C906.8 303.6 910.3 306.6 913.4 308.8C916.5 311.0 917.5 312.7 918.6 314.2C919.7 315.7 919.7 317.4 919.9 318.0C919.7 318.8 919.5 321.1 918.6 322.5C917.8 323.9 916.8 325.1 914.8 326.3C912.8 327.6 909.3 328.8 906.8 330.0C904.3 331.2 905.6 331.0 899.6 333.8C893.6 336.6 875.7 344.8 870.9 347.0L752.5 375.5C746.6 376.4 727.3 379.3 717.0 380.6C706.7 381.9 699.6 382.8 690.9 383.4C682.2 384.0 673.4 384.2 664.7 384.0C656.0 383.8 647.2 383.3 638.5 382.4C629.8 381.5 621.1 380.3 612.4 378.4C603.7 376.5 592.9 373.6 586.2 371.2C579.5 368.8 575.1 365.9 572.2 364.0C569.3 362.1 569.4 360.9 568.8 359.5C568.2 358.1 568.6 356.3 568.6 355.7Z" fill="none" stroke="#060606" stroke-width="1.25"/>
<path d="M936.9 477.7C936.8 478.5 937.6 480.4 936.0 482.5C934.4 484.6 931.5 487.5 927.2 490.4C922.9 493.3 917.7 496.3 910.2 500.0C902.7 503.7 886.8 510.7 882.1 512.8L759.6 542.1C755.1 542.9 744.4 545.2 732.8 546.8C721.2 548.4 704.4 550.5 690.2 551.5C676.0 552.5 660.1 552.8 647.7 552.8C635.3 552.8 624.6 552.1 615.7 551.5C606.8 550.9 601.6 550.4 594.5 548.9C587.4 547.4 580.0 545.2 573.2 542.6C566.5 540.0 559.0 536.0 554.0 533.0C549.0 530.0 545.6 527.3 543.4 524.5C541.2 521.7 541.1 517.4 540.6 516.0" fill="none" stroke="#0a0a0a" stroke-width="1.1"/>
<path d="M752.5 375.5L759.6 542.1M870.9 347L882.1 512.8" stroke="#0a0a0a" stroke-width="1" fill="none"/>
</g>
<ellipse cx="658.4" cy="398.7" rx="9.5" ry="1.8" fill="#1e1e1c" opacity=".7"/>
<!-- axes -->
<path d="M0 558.4L1452 206" stroke="#f57878" stroke-width="1" fill="none"/>
<path d="M34.5 171L1452 688.3" stroke="#66ea66" stroke-width="1" fill="none"/>
<g clip-path="url(#objclip)">
<path d="M0 558.4L1452 206" stroke="#9c1818" stroke-width="1.1" fill="none"/>
<path d="M34.5 171L1452 688.3" stroke="#178c17" stroke-width="1.1" fill="none"/>
</g>

<g id="smudge" fill="none" stroke="#7a7a7a" stroke-width="1"><path d="M1432 747.4L1440 748.2L1447.5 748.6" stroke-opacity=".8"/><path d="M1440.5 746.2L1442.5 748.6" stroke="#555" stroke-width="1.6"/><path d="M1435.5 748L1436.5 749" stroke="#555" stroke-width="1.4"/><path d="M1419 751.5h2.5M1440 750.5L1452 749.6" stroke-opacity=".7"/></g>

</svg>
<svg id="toolbar" width="1452" height="70" viewBox="0 0 1452 70" style="position:absolute;left:0;top:0">
<rect x="0" y="0" width="1452" height="69" fill="#f3f3f3"/>
<rect x="0" y="65" width="1452" height="1" fill="#dadada"/>
<!-- workspace button edge -->
<path d="M-6 -4H1.5Q4 -4 4 -1V51Q4 54.5 0.5 54.5H-6" fill="none" stroke="#d6d6d6" stroke-width="1"/>
<!-- active tab bar -->
<rect x="21.5" y="5.5" width="115" height="3" fill="#0696d7"/>
<g fill="#dadada"><rect x="276.2" y="10" width="1.6" height="52"/><rect x="588.2" y="10" width="1.6" height="52"/><rect x="717" y="10" width="1.6" height="52"/><rect x="831.2" y="10" width="1.6" height="52"/><rect x="905.2" y="10" width="1.6" height="52"/><rect x="989.2" y="10" width="1.6" height="52"/></g>
<g font-family="'Liberation Sans',Arial,sans-serif" font-size="11" fill="#2b2b2b">
<text x="107.2" y="60" textLength="56.3" lengthAdjust="spacingAndGlyphs">ERSTELLEN</text>
<text x="405" y="60" textLength="41.3" lengthAdjust="spacingAndGlyphs">ÄNDERN</text>
<text x="603.2" y="60" textLength="92.1" lengthAdjust="spacingAndGlyphs">ZUSAMMENFÜGEN</text>
<text x="732" y="60" textLength="76" lengthAdjust="spacingAndGlyphs">KONSTRUIEREN</text>
<text x="846.2" y="60" textLength="38.5" lengthAdjust="spacingAndGlyphs">PRÜFEN</text>
<text x="919.9" y="60" textLength="48.9" lengthAdjust="spacingAndGlyphs">EINFÜGEN</text>
<text x="1004" y="60" textLength="65.7" lengthAdjust="spacingAndGlyphs">AUSWÄHLEN</text>
</g>
<g fill="#2b2b2b">
<path d="M167.1 53.2h5.9l-2.95 3.7z"/><path d="M450.4 53.2h5.9l-2.95 3.7z"/><path d="M698.4 53.2h5.9l-2.95 3.7z"/><path d="M811.9 53.2h5.9l-2.95 3.7z"/><path d="M888.2 53.2h5.9l-2.95 3.7z"/><path d="M972.5 53.2h5.9l-2.95 3.7z"/><path d="M1073.3 53.2h5.9l-2.95 3.7z"/>
</g>
<!-- 1 sketch -->
<g fill="none" stroke="#525252" stroke-width="1.15">
<path d="M24.4 12.5H45.6M21.5 15.4V36.6M48.5 15.4V28.6M24.4 39.5H37.8"/>
<path d="M31.4 19.5H38.8M28.5 22.4V29.7M41.5 22.4Q40.5 30.5 31.4 32.5"/>
</g>
<g fill="#3f3f3f"><rect x="20" y="11" width="3" height="3"/><rect x="47" y="11" width="3" height="3"/><rect x="20" y="38" width="3" height="3"/><rect x="27" y="18" width="3" height="3"/><rect x="40" y="18" width="3" height="3"/><rect x="27" y="31" width="3" height="3"/></g>
<path d="M43.2 29.2h3.7v4.9h4.9v3.7h-4.9v4.9h-3.7v-4.9h-4.9v-3.7h4.9z" fill="#22b14c" stroke="#1a9c42" stroke-width=".6"/>
<!-- 2 extrude -->
<path d="M64.1 39H81.9V42.7H64.1z" fill="#b4b4b4"/><path d="M81.9 39L87.8 33.1V36.6L81.9 42.7z" fill="#a2a2a2"/>
<path d="M64.1 37.8H81.9V39H64.1z" fill="#e6e6e6"/><path d="M81.9 37.8L87.8 31.6V33.1L81.9 39z" fill="#d0d0d0"/>
<path d="M64.1 17.2H81.9V37.8H64.1z" fill="#6aade4"/><path d="M64.1 17.2L70.1 11.3H87.8L81.9 17.2z" fill="#8ccbfa"/><path d="M81.9 17.2L87.8 11.3V31.6L81.9 37.8z" fill="#4890cc"/>
<path d="M91.5 15V36.9" stroke="#222" stroke-width="1.2" fill="none"/><path d="M91.5 11.6L94.1 16H88.9z" fill="#222"/>
<!-- 3 revolve -->
<path d="M135.9 18.6Q123 8 109.5 16.6" fill="none" stroke="#222" stroke-width="1"/><path d="M106.5 18.9L107.6 14.6L111.2 17.9z" fill="#222"/>
<path d="M105.9 24.1Q121.7 12 137.2 23.8L131 29.7Q121.7 22.5 111.8 29.4z" fill="#8ccbfa"/>
<path d="M105.9 24.1L111.8 29.4V40L105.9 34.4z" fill="#4f97d2"/>
<path d="M111.8 29.4Q121.7 22.5 131 29.7V39Q121.7 32.5 111.8 40z" fill="#6aade4"/>
<path d="M132.3 29.8L137.7 24.9V33.8L132.3 39.4z" fill="#fff" stroke="#333" stroke-width="1"/>
<!-- 4 hole -->
<path d="M149.3 17.3H175V42.6H149.3z" fill="#dbdbdb"/><path d="M149.3 17.3L155.2 11.4H180.6L175 17.3z" fill="#f2f2f2"/><path d="M175 17.3L180.6 11.4V36.9L175 42.6z" fill="#bdbdbd"/>
<path d="M149.4 17.3L155.2 11.5H180.5V36.9L175 42.5H149.4z" fill="none" stroke="#555" stroke-width="1"/>
<circle cx="162.5" cy="29.4" r="8.2" fill="#f8f8f8" stroke="#555" stroke-width="1"/>
<path d="M160.9 23.6A6.6 6.6 0 1 0 169.2 30.2A6 6 0 0 1 160.9 23.6z" fill="#6aade4"/>
<!-- 5 pattern -->
<path d="M200.3 16.5H211.7M200.3 37.5H211.7M195.5 21.4V32.6" stroke="#444" stroke-width="1.1" fill="none"/>
<rect x="192.7" y="13.8" width="5.6" height="5.6" fill="#fff" stroke="#444" stroke-width="1"/>
<g fill="#6aade4" stroke="#4e9ad6" stroke-width=".6"><rect x="213.4" y="13.5" width="6.2" height="6.2"/><rect x="192.5" y="34.5" width="6.2" height="6.2"/><rect x="213.4" y="34.5" width="6.2" height="6.2"/></g>
<!-- 6 form -->
<path d="M235.3 24Q235.3 21 237.5 18.8L241 15.3Q243.3 13.1 246.5 13.1H251Q254 13.1 256 14.5L263.5 24Q265.2 26 265.2 29V32Q265.2 34.5 263 36.7L259.5 40.3Q257 42.8 254 42.8H242Q235.3 42.8 235.3 36z" fill="#dcc6f6" stroke="#9966cc" stroke-width=".9"/>
<path d="M238 21L242.5 15.5Q244 14 246.5 14H252L258.5 21.5z" fill="#c9a0f8"/>
<path d="M258.3 29.5L264.3 26V33L258.3 40z" fill="#8e62c8"/>
<rect x="237.5" y="22.3" width="19.2" height="18.3" rx="3.8" fill="#ab7fe6"/>
<path d="M245.6 16V41.5M236.5 31.3H257.5M261.5 27.5V36.5" stroke="#8a5fc0" stroke-width=".8" fill="none"/>
<path d="M258.5 11.3L260 16L263.4 14.4L262 18L266.6 19.5L262 21L263.4 24.6L260 23L258.5 27.7L257 23L253.6 24.6L255 21L250.4 19.5L255 18L253.6 14.4L257 16z" fill="#f7a400" stroke="#f6f6f6" stroke-width=".9" paint-order="stroke"/>
<!-- 7 presspull -->
<path d="M290.6 17.2H295.8V42.6H290.6z" fill="#dbdbdb"/><path d="M290.3 17.2L296.1 11.5H301L297.2 17.2z" fill="#f6f6f6"/>
<path d="M295.8 42.6H290.2V17.2L296.1 11.4H301" fill="none" stroke="#555" stroke-width="1.1"/>
<path d="M297.2 17.2H306V42.7H297.2z" fill="#6aade4"/><path d="M297.2 17.2L303.2 11.3H311.9L306 17.2z" fill="#8ccbfa"/><path d="M306 17.2L311.9 11.3V36.5L306 42.7z" fill="#4890cc"/>
<path d="M309.5 24.8H316v3H309.5z" fill="#f3f3f3"/><path d="M310 26.3H315.5" stroke="#222" stroke-width="1.3" fill="none"/><path d="M319.2 26.3L314.8 23.8V28.8z" fill="#222"/>
<!-- 8 fillet -->
<path d="M332.4 18.6L339.5 11.4H348.5L343.5 18.6z" fill="#f6f6f6"/>
<path d="M332.4 18.6H343.5A12.7 12.7 0 0 1 356.2 31.3V42.6H332.4z" fill="#dbdbdb"/>
<path d="M356.2 31.3L363.7 25.4V35.6L356.2 42.6z" fill="#bdbdbd"/>
<path d="M343.5 18.6L350.6 11.1A13.4 13.4 0 0 1 364 24.5L357.2 31.3A13.7 12.7 0 0 0 343.5 18.6z" fill="#6aade4"/>
<path d="M348.5 11.4H339.5L332.4 18.6V42.6H356.5L363.7 35.6V25.7" fill="none" stroke="#555" stroke-width="1.1"/>
<!-- 9 shell -->
<path d="M375.4 18.6L382.6 11.4H406.7L399.3 18.9z" fill="#f2f2f2"/><path d="M376 18.9H399.3V42H376z" fill="#dbdbdb"/><path d="M399.3 18.9L406.7 11.4V35.6L399.3 42.6z" fill="#bdbdbd"/>
<path d="M375.5 18.6L382.6 11.5H406.6V35.6L399.6 42.5H375.5z" fill="none" stroke="#606060" stroke-width="1.2"/>
<path d="M378.5 22H396.2V39.4H378.5z" fill="#f5f5f5"/>
<path d="M379.2 22.9H386.9V31L379.2 38.6z" fill="#4890cc"/><path d="M379.2 38.6L386.9 31H395V38.7z" fill="#8ccbfa"/>
<!-- 10 combine -->
<path d="M428.1 15.2H446.1V32.5H428.1z" fill="#6aade4"/><path d="M428.1 15.2L432.2 11.3H449.8L446.1 15.2z" fill="#8ccbfa"/><path d="M446.1 15.2L449.8 11.3V28.8L446.1 32.5z" fill="#4890cc"/>
<path d="M418.2 25.1H436.2V42.7H418.2z" fill="#6aade4"/><path d="M418.2 25.1L422.2 21.4H428.1V25.1z" fill="#8ccbfa"/><path d="M436.2 32.5H439.9V39L436.2 42.7z" fill="#4890cc"/>
<!-- 11 split -->
<path d="M463.2 17.2H485.1V26.6H463.2z" fill="#6aade4"/><path d="M463.2 17.2L469.3 11.3H491L485.1 17.2z" fill="#8ccbfa"/><path d="M485.1 17.2L491 11.3V20.7L485.1 26.6z" fill="#4890cc"/>
<path d="M463.2 31.9H485.1V41.5H463.2z" fill="#dbdbdb"/><path d="M485.1 31.9L490.8 27.9V36.2L485.1 41.5z" fill="#bdbdbd"/>
<path d="M463.3 31.9V41.5H485.2L490.8 36.2V28" fill="none" stroke="#555" stroke-width="1.1"/>
<path d="M460.9 29.4H485.4L492.9 22" fill="none" stroke="#fbfbfb" stroke-width="3.2"/><path d="M460.9 29.4H485.4L492.9 22" fill="none" stroke="#1e8fe6" stroke-width="1.2"/>
<!-- 12 move -->
<path d="M519.9 17V37M510 26.9H530" stroke="#2d2d2d" stroke-width="1.9" fill="none"/>
<path d="M519.9 11.4L524.9 18.9H514.9zM519.9 42.4L524.9 35H514.9zM504.3 26.9L512 21.9V31.9zM535.6 26.9L528.1 21.9V31.9z" fill="#2d2d2d"/>
<!-- 13 fx -->
<text font-family="'Liberation Serif','DejaVu Serif',serif" font-style="italic" fill="#585858"><tspan x="550.8" y="35.3" font-size="36.2">f</tspan><tspan x="564.1" y="38" font-size="32.5">x</tspan></text>
<!-- 14 new component -->
<path d="M617.3 30.8H629.2V42.6H617.3z" fill="#dbdbdb" stroke="#555" stroke-width="1"/>
<path d="M629.5 31.3L633.2 27.4H644.7L641 31.3z" fill="#f5f5f5"/><path d="M629.5 31.3H641V42.6H629.5z" fill="#dbdbdb"/><path d="M641 31.3L644.7 27.4V39L641 42.6z" fill="#bdbdbd"/>
<path d="M629.5 31.3L633.2 27.4H644.7V39L641 42.6H629.5z" fill="none" stroke="#555" stroke-width="1"/>
<path d="M617.3 19.2H629.2V30.8H617.3z" fill="#6aade4"/><path d="M617.3 19.2L621.2 15.2H632.9L629.2 19.2z" fill="#8ccbfa"/><path d="M629.2 19.2L632.9 15.2V26.9L629.2 30.8z" fill="#4890cc"/>
<path d="M640.4 11.3L641.9 16L645.3 14.4L643.9 18L648.5 19.5L643.9 21L645.3 24.6L641.9 23L640.4 27.7L638.9 23L635.5 24.6L636.9 21L632.3 19.5L636.9 18L635.5 14.4L638.9 16z" fill="#f7a400" stroke="#f6f6f6" stroke-width=".9" paint-order="stroke"/>
<!-- 15 joint -->
<path d="M662.6 20.6L669.5 14.2V34.4L663.9 39.6Q662.6 40 662.6 38.8z" fill="#c9c9c9" stroke="#555" stroke-width="1"/>
<path d="M669.2 14.8Q669.2 13.3 671.85 13.3Q674.5 13.3 674.5 14.8V24Q674.5 25.6 671.85 25.6Q669.2 25.6 669.2 24z" fill="#dcdcdc" stroke="#555" stroke-width="1"/>
<ellipse cx="671.85" cy="15" rx="1.5" ry=".7" fill="#fafafa" stroke="#777" stroke-width=".5"/>
<path d="M671.5 26.3V30.7" stroke="#1e8fe6" stroke-width="1.2"/>
<path d="M682.5 15.5L689.7 21.4V39.5Q689.7 40.8 688.4 40.4L682.5 34.4z" fill="#dedede" stroke="#555" stroke-width="1"/>
<path d="M677.6 23.8Q677.6 22.3 680.2 22.3Q682.8 22.3 682.8 23.8V33Q682.8 34.5 680.2 34.5Q677.6 34.5 677.6 33z" fill="#bfbfbf" stroke="#555" stroke-width="1"/>
<ellipse cx="680.2" cy="24" rx="1.5" ry=".7" fill="#eee" stroke="#777" stroke-width=".5"/>
<path d="M680.4 19.2V24.3" stroke="#1e8fe6" stroke-width="1.2"/>
<!-- 16 construct -->
<path d="M761.9 20H769.1V41.7H761.9z" fill="#dbdbdb"/><path d="M761.4 20L770.1 11.4H777.4L769.1 20z" fill="#f8f8f8"/>
<path d="M777.4 11.4H770.1L761.4 20V41.7H769.1" fill="none" stroke="#555" stroke-width="1.1"/>
<path d="M770.1 20L778.9 11.4V32.4L770.1 41.7z" fill="#5cc884"/>
<path d="M782 20L791 11.2V32.4L782 41.7z" fill="#e59a65"/>
<!-- 17 measure -->
<rect x="856.1" y="29.1" width="27.9" height="5.7" fill="#f7a400" stroke="#e89a00" stroke-width=".5"/>
<path d="M857.4 29.1v3M860.3 29.1v1.8M863.3 29.1v3M866.4 29.1v1.8M869.3 29.1v3M872.4 29.1v1.8M875.3 29.1v3M878.4 29.1v1.8M881.2 29.1v3" stroke="#555" stroke-width=".8" fill="none"/>
<path d="M856.5 19V28.3M883.6 19V28.3M858 23.4H882" stroke="#555" stroke-width="1" fill="none"/>
<path d="M857 23.4L860.8 21.1V25.7zM883.1 23.4L879.3 21.1V25.7z" fill="#555"/>
<!-- 18 image -->
<rect x="934.2" y="12.1" width="28.7" height="28.8" fill="#87cbfb" stroke="#4a96d4" stroke-width="1"/>
<circle cx="954.9" cy="20" r="3.3" fill="#ffffc8"/>
<path d="M934.7 31.5Q940 24 942.2 24Q944.5 24 948 29.5Q951.5 34.8 952.6 34.5Q953.5 34.3 955 32Q956.5 30.5 957.4 30.7Q959 31 962.4 35.2V40.4H934.7z" fill="#4591cc"/>
<!-- 19 select -->
<rect x="1024" y="8" width="38" height="38" fill="#0696d7"/>
<rect x="1027.5" y="11.5" width="27.3" height="21.2" fill="none" stroke="#22b14c" stroke-width="1" stroke-dasharray="3.2 2.2"/>
<path d="M1048.4 25.7V39.1L1051.2 36.5L1053.8 42.7L1056.2 41.6L1053.6 35.5L1057.9 35z" fill="#fff" stroke="#222" stroke-width=".9" stroke-linejoin="round"/>

</svg>

<svg id="tree" width="200" height="380" viewBox="0 0 200 380">
<rect x="-1.5" y="73.5" width="188" height="24" fill="#f3f3f3" stroke="#cacaca" stroke-width="1"/>
<circle cx="170.4" cy="85.4" r="4.5" fill="#2a2a2a"/><rect x="168" y="84.9" width="5" height="1.1" fill="#fff"/>
<path d="M182.5 80V90.8" stroke="#777" stroke-width="1"/><path d="M184.5 82.1V88.8" stroke="#8a8a8a" stroke-width="1"/>
<rect x="0" y="103" width="66.6" height="20" fill="#f3f3f3"/>
<rect x="0" y="127" width="95" height="20" fill="#f3f3f3"/>
<rect x="0" y="151" width="82.8" height="20" fill="#f3f3f3"/>
<rect x="0" y="175" width="55.8" height="20" fill="#f3f3f3"/>
<rect x="0" y="199" width="43.5" height="20" fill="#f3f3f3"/>
<rect x="0" y="223" width="47.9" height="20" fill="#f3f3f3"/>
<rect x="0" y="247" width="61.9" height="20" fill="#f3f3f3"/>
<rect x="0" y="271" width="65.7" height="20" fill="#f3f3f3"/>
<rect x="0" y="295" width="65.7" height="20" fill="#f3f3f3"/>
<rect x="0" y="319" width="67.4" height="20" fill="#f3f3f3"/>
<rect x="0" y="343" width="61.9" height="20" fill="#f3f3f3"/>
<rect x="0" y="105.2" width="41.9" height="15.5" fill="#969696"/>
<circle cx="52.5" cy="113.4" r="5.9" fill="#fafafa" stroke="#222" stroke-width="1.1"/><circle cx="52.5" cy="113.4" r="2.4" fill="#222"/>
<g font-family="'Liberation Sans',Arial,sans-serif" font-size="10.67" letter-spacing=".12" fill="#1e1e1e">
<text x="33.8" y="117.2" text-anchor="end" font-weight="bold" font-size="11.3" letter-spacing=".42" fill="#fff">Deckel v2</text>
<text x="83.7" y="140.8" text-anchor="end" letter-spacing="0" font-size="10.62">Dokumenteinstellungen</text>
<text x="70.9" y="164.8" text-anchor="end">Benannte Ansichten</text>
<text x="-0.4" y="188.8">Ursprung</text>
<text x="-0.3" y="212.8">Körper</text>
<text x="0.0" y="236.8">Skizzen</text>
<text x="16.5" y="260.8">Skizze1</text>
<text x="16.5" y="284.8" letter-spacing=".26">Skizze3</text>
<text x="16.5" y="308.8" letter-spacing=".26">Skizze4</text>
<text x="-0.3" y="332.8" letter-spacing=".02">Konstruktion</text>
<text x="16.5" y="356.8" letter-spacing="-.08">Ebene1</text>
</g>
<rect x="0" y="249" width="1.6" height="2" fill="#2a8be8"/><rect x="0" y="251" width="2.2" height="1" fill="#333"/><rect x="1.4" y="251" width=".9" height="7.5" fill="#333"/><rect x="0" y="258" width="2.9" height="2" fill="#e8413a"/><rect x="0" y="260" width="1.6" height="1.5" fill="#f7b400"/>
<rect x="0" y="297" width="1.6" height="2" fill="#2a8be8"/><rect x="0" y="299" width="2.2" height="1" fill="#333"/><rect x="1.4" y="299" width=".9" height="7.5" fill="#333"/><rect x="0" y="306" width="2.9" height="2" fill="#e8413a"/><rect x="0" y="308" width="1.6" height="1.5" fill="#f7b400"/>
<rect x="0" y="273" width="1.8" height="1" fill="#333"/><rect x="1" y="273" width=".9" height="11.5" fill="#333"/><rect x="-1" y="284.3" width="4" height="4" fill="#e03a3a" stroke="#b02020" stroke-width=".6"/>
<rect x="-2" y="345.2" width="4.7" height="11" fill="#fff" stroke="#6a6a6a" stroke-width=".9"/>
</svg>
</body></html>
